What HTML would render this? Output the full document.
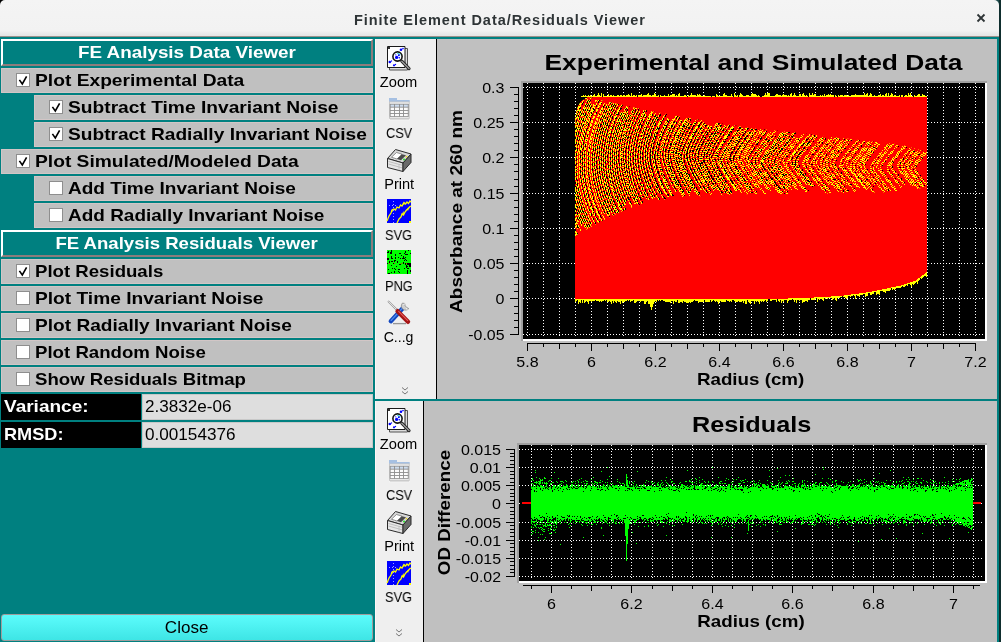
<!DOCTYPE html>
<html><head><meta charset="utf-8"><style>
*{margin:0;padding:0;box-sizing:border-box}
html,body{width:1001px;height:642px;overflow:hidden;background:#008080;font-family:"Liberation Sans",sans-serif}
.t{position:absolute;white-space:pre;line-height:1;will-change:transform}
.title{position:absolute;left:0;top:0;width:999px;height:37px;background:linear-gradient(#f4f4f4 0,#f2f2f2 85%,#e6e6e6 97%);border-bottom:1px solid #9c918b;border-radius:5px 5px 0 0}
.hdr{position:absolute;left:1px;width:372px;height:27px;background:#008080;border:2px solid;border-color:#fff #8c7c7c #8c7c7c #fff}
.row{position:absolute;height:25px;background:#c0c0c0;border:1px solid #d2c6c6}
.cb{position:absolute;width:14px;height:14px;background:#fff;border:1px solid #8e8e8e}
.cb svg{position:absolute;left:-1px;top:-1px}
.lab{position:absolute;left:1px;width:140px;height:26px;background:#000}
.val{position:absolute;left:142px;width:231px;height:26px;background:#dedede;border:1px solid #c8c8c8}
.close{position:absolute;left:1px;top:614px;width:372px;height:27px;border:1px solid #a09c9c;border-radius:3px;background:linear-gradient(#5cfcfc,#3ee5e5)}
.tb{position:absolute;background:#efefef;border-left:1px solid #fff6f6;border-right:1px solid #000}
.pw{position:absolute;background:#c0c0c0}
.ps{position:absolute;font-family:"Liberation Sans",sans-serif;shape-rendering:crispEdges;will-change:transform}
.ps text{shape-rendering:auto}
.rb{position:absolute;left:999px;top:0;width:2px;height:642px;background:#0f2e2e}
.c1{position:absolute;left:0;top:0;width:6px;height:6px;background:#000}
.c2{position:absolute;left:992px;top:0;width:8px;height:8px;background:#1d4a4a}
</style></head><body>
<div class="c1"></div><div class="c2"></div>
<div class="hdr" style="top:39px"></div>
<div class="hdr" style="top:230px"></div>
<div class="row" style="left:1px;top:68px;width:372px"></div>
<div class="cb" style="left:16px;top:73px"><svg width="13" height="13" viewBox="0 0 13 13"><path d="M3.4 6.9 L6.3 11.0 L10.6 3.3" fill="none" stroke="#000" stroke-width="1.6" stroke-linecap="butt" stroke-linejoin="miter"/></svg></div>
<div class="row" style="left:34px;top:95px;width:339px"></div>
<div class="cb" style="left:49px;top:100px"><svg width="13" height="13" viewBox="0 0 13 13"><path d="M3.4 6.9 L6.3 11.0 L10.6 3.3" fill="none" stroke="#000" stroke-width="1.6" stroke-linecap="butt" stroke-linejoin="miter"/></svg></div>
<div class="row" style="left:34px;top:122px;width:339px"></div>
<div class="cb" style="left:49px;top:127px"><svg width="13" height="13" viewBox="0 0 13 13"><path d="M3.4 6.9 L6.3 11.0 L10.6 3.3" fill="none" stroke="#000" stroke-width="1.6" stroke-linecap="butt" stroke-linejoin="miter"/></svg></div>
<div class="row" style="left:1px;top:149px;width:372px"></div>
<div class="cb" style="left:16px;top:154px"><svg width="13" height="13" viewBox="0 0 13 13"><path d="M3.4 6.9 L6.3 11.0 L10.6 3.3" fill="none" stroke="#000" stroke-width="1.6" stroke-linecap="butt" stroke-linejoin="miter"/></svg></div>
<div class="row" style="left:34px;top:176px;width:339px"></div>
<div class="cb" style="left:49px;top:181px"></div>
<div class="row" style="left:34px;top:203px;width:339px"></div>
<div class="cb" style="left:49px;top:208px"></div>
<div class="row" style="left:1px;top:259px;width:372px"></div>
<div class="cb" style="left:16px;top:264px"><svg width="13" height="13" viewBox="0 0 13 13"><path d="M3.4 6.9 L6.3 11.0 L10.6 3.3" fill="none" stroke="#000" stroke-width="1.6" stroke-linecap="butt" stroke-linejoin="miter"/></svg></div>
<div class="row" style="left:1px;top:286px;width:372px"></div>
<div class="cb" style="left:16px;top:291px"></div>
<div class="row" style="left:1px;top:313px;width:372px"></div>
<div class="cb" style="left:16px;top:318px"></div>
<div class="row" style="left:1px;top:340px;width:372px"></div>
<div class="cb" style="left:16px;top:345px"></div>
<div class="row" style="left:1px;top:367px;width:372px"></div>
<div class="cb" style="left:16px;top:372px"></div>
<div class="lab" style="top:394px"></div>
<div class="val" style="top:394px"></div>
<div class="lab" style="top:422px"></div>
<div class="val" style="top:422px"></div>
<div class="close"></div>
<div class="title"></div>
<svg class="x" width="10" height="10" viewBox="0 0 10 10" style="position:absolute;left:976px;top:13px"><path d="M1.5 1.5 L8.5 8.5 M8.5 1.5 L1.5 8.5" stroke="#2e3436" stroke-width="1.8"/></svg>
<div class="tb" style="left:375px;top:39px;width:62px;height:360px"></div>
<div class="tb" style="left:375px;top:401px;width:49px;height:241px"></div>
<div class="pw" style="left:437px;top:39px;width:560px;height:360px"></div>
<div class="pw" style="left:424px;top:401px;width:573px;height:241px"></div>
<svg class="ps" style="left:437px;top:39px" width="560" height="360" viewBox="437 39 560 360"><rect x="521" y="81" width="466" height="260" fill="#fff"/>
<path d="M521 81H987v2H523V341H521z" fill="#a0a0a0"/>
<rect x="523" y="83" width="462" height="256" fill="#000"/>
<path d="M527.5 83V338M543.5 83V338M559.5 83V338M575.5 83V338M591.5 83V338M607.5 83V338M623.5 83V338M639.5 83V338M655.5 83V338M671.5 83V338M687.5 83V338M703.5 83V338M719.5 83V338M735.5 83V338M751.5 83V338M767.5 83V338M783.5 83V338M799.5 83V338M815.5 83V338M831.5 83V338M847.5 83V338M863.5 83V338M879.5 83V338M895.5 83V338M911.5 83V338M927.5 83V338M943.5 83V338M959.5 83V338M975.5 83V338" stroke="#fff" stroke-width="1" stroke-dasharray="1 2" fill="none"/><path d="M523 87.5H984M523 122.5H984M523 157.5H984M523 193.5H984M523 228.5H984M523 263.5H984M523 298.5H984M523 334.5H984" stroke="#fff" stroke-width="1" stroke-dasharray="1 2" fill="none"/>
<defs>
<pattern id="pL" width="2" height="8" patternUnits="userSpaceOnUse" patternTransform="skewY(-20)">
<rect width="2" height="8" fill="#f00"/>
<rect x="0" y="0" width="1" height="3" fill="#ff0"/><rect x="0" y="4" width="1" height="3" fill="#ff0"/>
<rect x="1" y="1" width="1" height="2" fill="#000"/><rect x="1" y="5" width="1" height="2" fill="#000"/>
</pattern>
<pattern id="pR" width="4" height="4" patternUnits="userSpaceOnUse">
<rect width="4" height="4" fill="#f00"/>
<rect x="0" y="0" width="1" height="1" fill="#ff0"/><rect x="2" y="0" width="1" height="1" fill="#ff0"/>
<rect x="1" y="1" width="1" height="1" fill="#ff0"/><rect x="3" y="1" width="1" height="1" fill="#ff0"/>
<rect x="0" y="2" width="1" height="1" fill="#ff0"/><rect x="2" y="2" width="1" height="1" fill="#000"/>
<rect x="1" y="3" width="1" height="1" fill="#000"/><rect x="3" y="3" width="1" height="1" fill="#ff0"/>
</pattern>
</defs>
<path d="M581 96h1v1h-1zM582 96h1v1h-1zM583 95h1v2h-1zM584 96h1v1h-1zM585 95h1v2h-1zM586 96h1v1h-1zM587 96h1v1h-1zM588 95h1v2h-1zM590 95h1v2h-1zM591 96h1v1h-1zM592 96h1v1h-1zM593 95h1v2h-1zM594 94h1v3h-1zM595 96h1v1h-1zM596 96h1v1h-1zM597 95h1v2h-1zM598 93h1v4h-1zM599 95h1v2h-1zM600 96h1v1h-1zM601 93h1v4h-1zM603 94h1v3h-1zM604 96h1v1h-1zM605 96h1v1h-1zM606 96h1v1h-1zM607 96h1v1h-1zM608 94h1v3h-1zM609 96h1v1h-1zM610 95h1v2h-1zM611 95h1v2h-1zM612 96h1v1h-1zM613 95h1v2h-1zM614 96h1v1h-1zM615 96h1v1h-1zM616 96h1v1h-1zM617 95h1v2h-1zM618 95h1v2h-1zM619 96h1v1h-1zM620 95h1v2h-1zM621 95h1v2h-1zM622 96h1v1h-1zM623 95h1v2h-1zM624 95h1v2h-1zM625 96h1v1h-1zM626 95h1v2h-1zM627 95h1v2h-1zM628 94h1v3h-1zM629 95h1v2h-1zM630 96h1v1h-1zM631 93h1v4h-1zM632 96h1v1h-1zM633 95h1v2h-1zM634 95h1v2h-1zM635 96h1v1h-1zM636 95h1v2h-1zM638 95h1v2h-1zM639 95h1v2h-1zM640 95h1v2h-1zM641 94h1v3h-1zM642 96h1v1h-1zM643 95h1v2h-1zM644 95h1v2h-1zM645 95h1v2h-1zM646 95h1v2h-1zM647 94h1v3h-1zM648 93h1v4h-1zM649 95h1v2h-1zM650 95h1v2h-1zM651 96h1v1h-1zM652 95h1v2h-1zM653 95h1v2h-1zM654 93h1v4h-1zM655 94h1v3h-1zM656 96h1v1h-1zM657 96h1v1h-1zM658 95h1v2h-1zM660 95h1v2h-1zM661 96h1v1h-1zM662 96h1v1h-1zM663 96h1v1h-1zM664 95h1v2h-1zM665 96h1v1h-1zM666 96h1v1h-1zM667 96h1v1h-1zM668 94h1v3h-1zM669 96h1v1h-1zM670 95h1v2h-1zM671 95h1v2h-1zM672 94h1v3h-1zM673 94h1v3h-1zM674 94h1v3h-1zM675 96h1v1h-1zM676 95h1v2h-1zM677 96h1v1h-1zM678 94h1v3h-1zM679 93h1v4h-1zM680 96h1v1h-1zM681 96h1v1h-1zM682 96h1v1h-1zM683 96h1v1h-1zM684 95h1v2h-1zM685 95h1v2h-1zM686 96h1v1h-1zM688 95h1v2h-1zM689 96h1v1h-1zM690 95h1v2h-1zM691 93h1v4h-1zM692 95h1v2h-1zM693 95h1v2h-1zM694 95h1v2h-1zM695 95h1v2h-1zM696 96h1v1h-1zM697 94h1v3h-1zM698 95h1v2h-1zM699 94h1v3h-1zM700 95h1v2h-1zM701 96h1v1h-1zM702 96h1v1h-1zM703 96h1v1h-1zM704 95h1v2h-1zM705 96h1v1h-1zM706 96h1v1h-1zM707 96h1v1h-1zM708 96h1v1h-1zM709 96h1v1h-1zM710 96h1v1h-1zM712 96h1v1h-1zM713 96h1v1h-1zM714 96h1v1h-1zM716 94h1v3h-1zM717 95h1v2h-1zM718 96h1v1h-1zM719 96h1v1h-1zM720 96h1v1h-1zM721 96h1v1h-1zM722 96h1v1h-1zM723 94h1v3h-1zM724 93h1v4h-1zM725 95h1v2h-1zM726 95h1v2h-1zM727 96h1v1h-1zM728 96h1v1h-1zM729 96h1v1h-1zM730 96h1v1h-1zM731 94h1v3h-1zM732 96h1v1h-1zM734 93h1v4h-1zM735 95h1v2h-1zM736 96h1v1h-1zM737 95h1v2h-1zM739 95h1v2h-1zM740 93h1v4h-1zM741 94h1v3h-1zM742 95h1v2h-1zM743 96h1v1h-1zM744 96h1v1h-1zM745 96h1v1h-1zM746 95h1v2h-1zM747 95h1v2h-1zM748 95h1v2h-1zM749 96h1v1h-1zM750 96h1v1h-1zM751 94h1v3h-1zM752 93h1v4h-1zM753 94h1v3h-1zM754 94h1v3h-1zM755 94h1v3h-1zM756 95h1v2h-1zM757 96h1v1h-1zM758 95h1v2h-1zM759 96h1v1h-1zM762 96h1v1h-1zM763 96h1v1h-1zM764 95h1v2h-1zM765 93h1v4h-1zM766 95h1v2h-1zM767 93h1v4h-1zM768 93h1v4h-1zM769 93h1v4h-1zM770 96h1v1h-1zM771 96h1v1h-1zM772 96h1v1h-1zM773 96h1v1h-1zM774 96h1v1h-1zM775 95h1v2h-1zM776 94h1v3h-1zM777 94h1v3h-1zM778 95h1v2h-1zM779 95h1v2h-1zM780 95h1v2h-1zM781 96h1v1h-1zM782 95h1v2h-1zM783 94h1v3h-1zM784 95h1v2h-1zM785 95h1v2h-1zM786 95h1v2h-1zM787 96h1v1h-1zM788 95h1v2h-1zM789 96h1v1h-1zM790 94h1v3h-1zM791 93h1v4h-1zM792 96h1v1h-1zM793 95h1v2h-1zM794 93h1v4h-1zM795 95h1v2h-1zM796 96h1v1h-1zM797 96h1v1h-1zM798 96h1v1h-1zM799 94h1v3h-1zM800 94h1v3h-1zM801 96h1v1h-1zM802 94h1v3h-1zM803 93h1v4h-1zM804 95h1v2h-1zM805 96h1v1h-1zM806 95h1v2h-1zM807 96h1v1h-1zM809 93h1v4h-1zM810 95h1v2h-1zM811 95h1v2h-1zM812 93h1v4h-1zM813 95h1v2h-1zM814 94h1v3h-1zM815 94h1v3h-1zM816 96h1v1h-1zM817 96h1v1h-1zM818 96h1v1h-1zM819 96h1v1h-1zM820 95h1v2h-1zM821 96h1v1h-1zM822 95h1v2h-1zM823 96h1v1h-1zM824 94h1v3h-1zM825 96h1v1h-1zM826 95h1v2h-1zM827 95h1v2h-1zM828 94h1v3h-1zM829 95h1v2h-1zM830 94h1v3h-1zM831 95h1v2h-1zM832 95h1v2h-1zM833 95h1v2h-1zM835 95h1v2h-1zM836 96h1v1h-1zM838 95h1v2h-1zM839 96h1v1h-1zM840 95h1v2h-1zM841 95h1v2h-1zM842 95h1v2h-1zM843 96h1v1h-1zM844 95h1v2h-1zM845 95h1v2h-1zM846 95h1v2h-1zM847 96h1v1h-1zM848 95h1v2h-1zM849 96h1v1h-1zM850 96h1v1h-1zM851 95h1v2h-1zM852 95h1v2h-1zM853 95h1v2h-1zM854 95h1v2h-1zM855 94h1v3h-1zM856 95h1v2h-1zM857 95h1v2h-1zM858 95h1v2h-1zM859 95h1v2h-1zM860 95h1v2h-1zM861 95h1v2h-1zM862 95h1v2h-1zM863 95h1v2h-1zM864 93h1v4h-1zM865 95h1v2h-1zM866 94h1v3h-1zM867 93h1v4h-1zM868 96h1v1h-1zM869 95h1v2h-1zM870 93h1v4h-1zM871 94h1v3h-1zM872 96h1v1h-1zM873 96h1v1h-1zM874 95h1v2h-1zM875 96h1v1h-1zM876 96h1v1h-1zM877 96h1v1h-1zM878 95h1v2h-1zM879 95h1v2h-1zM880 94h1v3h-1zM881 96h1v1h-1zM882 95h1v2h-1zM883 95h1v2h-1zM884 96h1v1h-1zM885 94h1v3h-1zM886 93h1v4h-1zM887 96h1v1h-1zM888 93h1v4h-1zM889 96h1v1h-1zM890 95h1v2h-1zM891 93h1v4h-1zM892 94h1v3h-1zM893 96h1v1h-1zM894 95h1v2h-1zM895 95h1v2h-1zM896 96h1v1h-1zM897 96h1v1h-1zM898 96h1v1h-1zM899 95h1v2h-1zM901 95h1v2h-1zM902 95h1v2h-1zM904 96h1v1h-1zM905 95h1v2h-1zM906 95h1v2h-1zM907 96h1v1h-1zM908 93h1v4h-1zM909 95h1v2h-1zM910 93h1v4h-1zM911 96h1v1h-1zM912 96h1v1h-1zM914 95h1v2h-1zM915 96h1v1h-1zM916 96h1v1h-1zM917 95h1v2h-1zM918 94h1v3h-1zM919 94h1v3h-1zM920 96h1v1h-1zM921 96h1v1h-1zM922 94h1v3h-1zM923 95h1v2h-1zM924 95h1v2h-1zM925 96h1v1h-1zM926 96h1v1h-1z" fill="#ff0"/>
<path d="M575 299h1v3h-1zM576 299h1v2h-1zM577 299h1v1h-1zM578 299h1v5h-1zM579 299h1v3h-1zM580 299h1v4h-1zM581 299h1v1h-1zM582 299h1v4h-1zM583 299h1v1h-1zM584 299h1v4h-1zM585 299h1v3h-1zM586 299h1v2h-1zM587 299h1v3h-1zM588 299h1v5h-1zM589 299h1v2h-1zM590 299h1v2h-1zM591 299h1v3h-1zM592 299h1v2h-1zM593 299h1v2h-1zM594 299h1v2h-1zM595 299h1v1h-1zM596 299h1v2h-1zM597 299h1v2h-1zM598 299h1v2h-1zM599 299h1v3h-1zM600 299h1v2h-1zM601 299h1v3h-1zM602 299h1v2h-1zM603 299h1v2h-1zM604 299h1v1h-1zM605 299h1v2h-1zM606 299h1v1h-1zM607 299h1v3h-1zM608 299h1v3h-1zM609 299h1v2h-1zM610 299h1v3h-1zM611 299h1v5h-1zM612 299h1v2h-1zM613 299h1v4h-1zM614 299h1v2h-1zM615 299h1v3h-1zM616 299h1v4h-1zM617 299h1v2h-1zM618 299h1v3h-1zM619 299h1v3h-1zM620 299h1v5h-1zM621 299h1v2h-1zM622 299h1v4h-1zM623 299h1v3h-1zM624 299h1v3h-1zM625 299h1v2h-1zM626 299h1v2h-1zM627 299h1v1h-1zM628 299h1v2h-1zM629 299h1v1h-1zM630 299h1v3h-1zM631 299h1v2h-1zM632 299h1v2h-1zM633 299h1v1h-1zM634 299h1v4h-1zM635 299h1v4h-1zM636 299h1v3h-1zM637 299h1v2h-1zM638 299h1v2h-1zM639 299h1v2h-1zM640 299h1v3h-1zM641 299h1v2h-1zM642 299h1v2h-1zM643 299h1v2h-1zM644 299h1v5h-1zM645 299h1v5h-1zM646 299h1v3h-1zM647 299h1v2h-1zM648 299h1v5h-1zM649 299h1v5h-1zM650 299h1v8h-1zM651 299h1v11h-1zM652 299h1v8h-1zM653 299h1v5h-1zM654 299h1v3h-1zM655 299h1v2h-1zM656 299h1v3h-1zM657 299h1v1h-1zM658 299h1v2h-1zM659 299h1v1h-1zM660 299h1v2h-1zM661 299h1v1h-1zM662 299h1v1h-1zM663 299h1v2h-1zM664 299h1v2h-1zM665 299h1v3h-1zM666 299h1v3h-1zM667 299h1v3h-1zM668 299h1v3h-1zM669 299h1v3h-1zM670 299h1v4h-1zM671 299h1v2h-1zM672 299h1v2h-1zM673 299h1v5h-1zM674 299h1v2h-1zM675 299h1v3h-1zM676 299h1v3h-1zM677 299h1v1h-1zM678 299h1v4h-1zM679 299h1v4h-1zM680 299h1v3h-1zM681 299h1v3h-1zM682 299h1v4h-1zM683 299h1v2h-1zM684 299h1v3h-1zM685 299h1v3h-1zM686 299h1v4h-1zM687 299h1v4h-1zM688 299h1v4h-1zM689 299h1v3h-1zM690 299h1v4h-1zM691 299h1v3h-1zM692 299h1v3h-1zM693 299h1v2h-1zM694 299h1v1h-1zM695 299h1v2h-1zM696 299h1v2h-1zM697 299h1v2h-1zM698 299h1v4h-1zM699 299h1v3h-1zM700 299h1v3h-1zM701 299h1v3h-1zM702 299h1v3h-1zM703 299h1v3h-1zM704 299h1v1h-1zM705 299h1v3h-1zM706 299h1v3h-1zM707 299h1v3h-1zM708 299h1v3h-1zM709 299h1v3h-1zM710 299h1v1h-1zM711 299h1v3h-1zM712 299h1v2h-1zM713 299h1v1h-1zM714 299h1v2h-1zM715 299h1v3h-1zM716 299h1v2h-1zM717 299h1v3h-1zM718 299h1v5h-1zM719 299h1v3h-1zM720 299h1v2h-1zM721 299h1v3h-1zM722 299h1v3h-1zM723 299h1v3h-1zM724 299h1v3h-1zM725 299h1v3h-1zM726 299h1v1h-1zM727 299h1v2h-1zM728 299h1v2h-1zM729 299h1v3h-1zM730 299h1v2h-1zM731 299h1v3h-1zM732 299h1v1h-1zM733 299h1v1h-1zM734 299h1v2h-1zM735 299h1v3h-1zM736 299h1v3h-1zM737 299h1v3h-1zM738 299h1v2h-1zM739 299h1v3h-1zM740 299h1v3h-1zM741 299h1v3h-1zM742 299h1v2h-1zM743 299h1v4h-1zM744 299h1v2h-1zM745 299h1v5h-1zM746 299h1v5h-1zM747 299h1v1h-1zM748 299h1v3h-1zM749 299h1v4h-1zM750 299h1v5h-1zM751 299h1v2h-1zM752 299h1v2h-1zM753 299h1v2h-1zM754 299h1v5h-1zM755 299h1v2h-1zM756 299h1v3h-1zM757 299h1v2h-1zM758 299h1v3h-1zM759 299h1v5h-1zM760 299h1v2h-1zM761 298h1v4h-1zM762 298h1v3h-1zM763 298h1v4h-1zM764 298h1v3h-1zM765 298h1v2h-1zM766 298h1v4h-1zM767 298h1v3h-1zM768 298h1v1h-1zM769 298h1v1h-1zM770 298h1v3h-1zM771 298h1v3h-1zM772 298h1v2h-1zM773 298h1v2h-1zM774 298h1v2h-1zM775 298h1v2h-1zM776 298h1v4h-1zM777 298h1v1h-1zM778 298h1v3h-1zM779 298h1v4h-1zM780 298h1v2h-1zM781 298h1v5h-1zM782 298h1v3h-1zM783 298h1v4h-1zM784 298h1v2h-1zM785 298h1v2h-1zM786 298h1v2h-1zM787 298h1v5h-1zM788 298h1v3h-1zM789 298h1v2h-1zM790 298h1v2h-1zM791 298h1v2h-1zM792 298h1v1h-1zM793 298h1v2h-1zM794 298h1v4h-1zM795 298h1v2h-1zM796 298h1v5h-1zM797 298h1v2h-1zM798 298h1v2h-1zM799 298h1v3h-1zM800 298h1v2h-1zM801 298h1v2h-1zM802 298h1v5h-1zM803 298h1v4h-1zM804 298h1v4h-1zM805 298h1v3h-1zM806 297h1v4h-1zM807 297h1v5h-1zM808 297h1v3h-1zM809 297h1v3h-1zM810 297h1v1h-1zM811 297h1v3h-1zM812 297h1v3h-1zM813 297h1v3h-1zM814 297h1v3h-1zM815 297h1v2h-1zM816 297h1v1h-1zM817 297h1v5h-1zM818 297h1v2h-1zM819 297h1v3h-1zM820 297h1v2h-1zM821 297h1v2h-1zM822 297h1v3h-1zM823 296h1v5h-1zM824 296h1v2h-1zM825 296h1v3h-1zM826 296h1v2h-1zM827 296h1v3h-1zM828 296h1v2h-1zM829 296h1v2h-1zM830 296h1v2h-1zM831 296h1v2h-1zM832 296h1v4h-1zM833 296h1v3h-1zM834 296h1v2h-1zM835 296h1v4h-1zM836 296h1v5h-1zM837 296h1v2h-1zM838 296h1v2h-1zM839 296h1v2h-1zM840 296h1v1h-1zM841 295h1v2h-1zM842 295h1v1h-1zM843 295h1v2h-1zM844 295h1v2h-1zM845 295h1v3h-1zM846 295h1v4h-1zM847 295h1v3h-1zM848 294h1v2h-1zM849 294h1v2h-1zM850 294h1v3h-1zM851 294h1v2h-1zM852 294h1v2h-1zM853 294h1v1h-1zM854 294h1v2h-1zM855 294h1v5h-1zM856 293h1v2h-1zM857 293h1v3h-1zM858 293h1v3h-1zM859 293h1v4h-1zM860 293h1v2h-1zM861 293h1v2h-1zM862 293h1v2h-1zM863 292h1v2h-1zM864 292h1v2h-1zM865 292h1v5h-1zM866 292h1v4h-1zM867 292h1v4h-1zM868 292h1v1h-1zM869 292h1v1h-1zM870 292h1v3h-1zM871 291h1v4h-1zM872 291h1v3h-1zM873 291h1v3h-1zM874 291h1v1h-1zM875 290h1v2h-1zM876 290h1v5h-1zM877 290h1v4h-1zM878 290h1v4h-1zM879 290h1v5h-1zM880 289h1v2h-1zM881 289h1v2h-1zM882 289h1v2h-1zM883 289h1v3h-1zM884 289h1v3h-1zM885 288h1v5h-1zM886 288h1v3h-1zM887 288h1v3h-1zM888 288h1v3h-1zM889 288h1v3h-1zM890 287h1v3h-1zM891 287h1v1h-1zM892 287h1v3h-1zM893 287h1v2h-1zM894 286h1v4h-1zM895 286h1v3h-1zM896 286h1v2h-1zM897 286h1v2h-1zM898 286h1v2h-1zM899 285h1v3h-1zM900 285h1v3h-1zM901 285h1v2h-1zM902 285h1v1h-1zM903 284h1v3h-1zM904 284h1v3h-1zM905 284h1v2h-1zM906 283h1v2h-1zM907 283h1v3h-1zM908 283h1v1h-1zM909 282h1v2h-1zM910 282h1v3h-1zM911 282h1v5h-1zM912 281h1v3h-1zM913 281h1v4h-1zM914 281h1v3h-1zM915 281h1v2h-1zM916 280h1v2h-1zM917 279h1v5h-1zM918 278h1v3h-1zM919 278h1v2h-1zM920 277h1v1h-1zM921 276h1v3h-1zM922 275h1v3h-1zM923 275h1v2h-1zM924 274h1v2h-1zM925 273h1v3h-1zM926 272h1v5h-1z" fill="#ff0"/>
<path d="M575 299L575 120L577 108L581 101L587 97.5L592 97L927 97L927 272L915 281L900 285.7L870 292L840 296L800 298.3L760 299z" fill="#f00"/>
<path d="M575.5 236V120Q576 103 590 96.5" stroke="#ff0" stroke-width="1" fill="none" stroke-dasharray="2 2"/>
<clipPath id="cband"><path d="M575.0 130.0L576.0 112.0L579.0 104.0L583.0 100.0L588.0 98.0L592.0 97.6L600.0 100.0L608.0 101.8L616.0 103.5L624.0 105.3L632.0 107.0L640.0 108.8L648.0 110.6L656.0 112.1L664.0 113.5L672.0 115.0L680.0 116.4L688.0 117.8L696.0 119.3L704.0 120.6L712.0 121.9L720.0 123.2L728.0 124.5L736.0 125.8L744.0 127.0L752.0 128.2L760.0 129.0L768.0 129.8L776.0 130.6L784.0 131.4L792.0 132.2L800.0 133.0L808.0 134.0L816.0 134.9L824.0 135.9L832.0 136.8L840.0 137.8L848.0 138.8L856.0 139.7L864.0 140.5L872.0 141.4L880.0 142.3L888.0 143.2L896.0 144.1L904.0 145.6L912.0 147.8L920.0 150.1L927.0 152.0L927.0 187.0L927.0 187.0L919.0 188.5L911.0 190.0L903.0 191.4L895.0 192.1L887.0 192.3L879.0 192.4L871.0 192.6L863.0 192.7L855.0 192.9L847.0 193.1L839.0 193.2L831.0 193.4L823.0 193.5L815.0 193.7L807.0 193.9L799.0 194.0L791.0 194.0L783.0 194.0L775.0 194.0L767.0 194.0L759.0 194.0L751.0 194.0L743.0 194.3L735.0 194.6L727.0 194.9L719.0 195.2L711.0 195.6L703.0 195.9L695.0 196.5L687.0 197.3L679.0 198.1L671.0 198.9L663.0 199.7L655.0 200.5L647.0 202.1L639.0 205.0L631.0 207.8L623.0 211.0L615.0 214.8L607.0 218.6L599.0 222.6L591.0 227.0L583.0 231.5L575.0 236.0L575.0 236.0z"/></clipPath><g clip-path="url(#cband)">
<path d="M567.3 95.6L559.6 109.8L553.6 124.0L549.3 138.2L546.8 152.4L546.0 166.6L546.9 180.8L549.6 195.0L554.0 209.2L560.1 223.4L568.0 237.6M565.3 106.3L559.5 118.9L555.1 131.5L552.1 144.1L550.4 156.6L550.1 169.2L551.1 181.8L553.5 194.4L557.2 207.0L562.3 219.6L568.8 232.1M575.6 91.8L567.2 106.3L560.7 120.8L556.0 135.3L553.1 149.8L552.0 164.4L552.7 178.9L555.2 193.4L559.5 207.9L565.6 222.4L573.5 237.0M567.8 108.9L562.9 120.1L559.1 131.2L556.3 142.4L554.5 153.5L553.9 164.6L554.3 175.8L555.8 186.9L558.3 198.1L561.9 209.2L566.5 220.4M578.8 92.7L571.2 106.1L565.1 119.5L560.5 132.9L557.5 146.3L556.0 159.7L556.0 173.1L557.6 186.4L560.7 199.8L565.4 213.2L571.6 226.6M581.8 91.2L573.5 105.6L566.9 120.1L562.1 134.5L559.1 148.9L557.9 163.3L558.4 177.7L560.8 192.1L564.9 206.5L570.8 220.9L578.5 235.3M574.2 108.1L569.0 119.6L565.0 131.2L562.1 142.7L560.4 154.2L559.8 165.8L560.4 177.3L562.1 188.9L564.9 200.4L568.9 211.9L574.0 223.5M582.3 96.9L575.3 110.0L569.7 123.1L565.7 136.2L563.0 149.2L561.9 162.3L562.2 175.4L564.0 188.4L567.2 201.5L572.0 214.6L578.1 227.7M588.4 93.3L581.1 106.1L575.3 118.8L570.8 131.5L567.8 144.3L566.1 157.0L565.8 169.8L566.9 182.5L569.4 195.2L573.3 208.0L578.6 220.7M580.9 110.7L576.0 122.0L572.3 133.4L569.7 144.7L568.2 156.1L567.8 167.5L568.5 178.8L570.3 190.2L573.2 201.5L577.2 212.9L582.3 224.3M593.8 91.2L585.8 104.9L579.5 118.5L574.7 132.2L571.5 145.8L570.0 159.5L570.0 173.2L571.7 186.8L574.9 200.5L579.7 214.1L586.2 227.8M593.2 95.4L585.5 109.6L579.5 123.9L575.2 138.1L572.7 152.3L571.9 166.5L572.8 180.8L575.5 195.0L579.9 209.2L586.0 223.4L593.9 237.6M590.3 104.3L584.2 117.2L579.5 130.1L576.2 143.1L574.4 156.0L574.0 168.9L575.0 181.9L577.5 194.8L581.4 207.7L586.8 220.7L593.5 233.6M591.7 105.9L586.1 117.8L581.7 129.8L578.5 141.8L576.7 153.8L576.0 165.7L576.7 177.7L578.6 189.7L581.7 201.6L586.1 213.6L591.7 225.6M594.6 107.0L589.0 119.2L584.8 131.3L581.9 143.5L580.3 155.7L580.1 167.9L581.1 180.0L583.5 192.2L587.2 204.4L592.3 216.6L598.6 228.7M604.5 91.6L597.3 103.9L591.6 116.2L587.1 128.5L584.1 140.8L582.4 153.1L582.1 165.4L583.1 177.7L585.5 190.0L589.2 202.3L594.4 214.6M606.7 93.8L598.9 107.3L592.7 120.7L588.1 134.2L585.3 147.7L584.0 161.2L584.5 174.7L586.5 188.2L590.3 201.6L595.6 215.1L602.7 228.6M604.5 105.1L598.6 117.0L594.0 129.0L590.7 140.9L588.8 152.8L588.2 164.8L588.9 176.7L590.9 188.6L594.2 200.6L598.9 212.5L604.9 224.4M607.1 105.9L602.0 116.6L598.0 127.2L595.0 137.9L593.2 148.5L592.4 159.2L592.7 169.8L594.0 180.5L596.5 191.1L600.0 201.8L604.6 212.5M614.0 97.2L607.0 109.9L601.6 122.6L597.7 135.3L595.3 148.0L594.5 160.7L595.3 173.4L597.6 186.1L601.5 198.7L606.9 211.4L613.9 224.1M614.9 99.5L608.8 110.9L603.9 122.3L600.2 133.7L597.9 145.1L596.8 156.5L597.0 167.9L598.4 179.3L601.2 190.7L605.2 202.1L610.4 213.5M619.6 95.3L612.5 107.7L606.8 120.1L602.7 132.4L600.0 144.8L598.9 157.2L599.4 169.6L601.3 181.9L604.8 194.3L609.7 206.7L616.2 219.0M618.4 100.9L612.3 112.3L607.6 123.6L604.1 134.9L602.0 146.2L601.1 157.6L601.5 168.9L603.2 180.2L606.3 191.6L610.6 202.9L616.2 214.2M620.1 102.3L614.0 113.9L609.2 125.6L605.9 137.2L603.9 148.8L603.3 160.5L604.1 172.1L606.3 183.7L609.8 195.4L614.8 207.0L621.1 218.6M622.6 104.1L616.2 116.0L611.3 128.0L607.9 140.0L606.0 152.0L605.6 164.0L606.7 176.0L609.2 188.0L613.3 199.9L618.8 211.9L625.8 223.9M626.2 99.1L619.5 111.1L614.3 123.1L610.6 135.2L608.4 147.2L607.8 159.2L608.7 171.2L611.1 183.2L615.0 195.2L620.4 207.3L627.3 219.3M621.7 113.5L617.1 123.9L613.6 134.3L611.3 144.8L610.2 155.2L610.2 165.6L611.4 176.0L613.7 186.4L617.2 196.8L621.8 207.2L627.6 217.7M629.5 103.0L623.4 114.1L618.6 125.2L615.2 136.2L613.1 147.3L612.3 158.4L612.8 169.4L614.6 180.5L617.8 191.6L622.3 202.6L628.1 213.7M630.2 104.9L624.9 114.9L620.6 124.9L617.5 134.9L615.5 144.9L614.5 154.9L614.7 164.9L615.9 174.8L618.2 184.8L621.6 194.8L626.2 204.8M628.2 112.6L624.2 121.5L621.0 130.3L618.6 139.2L617.2 148.1L616.6 156.9L616.9 165.8L618.1 174.7L620.1 183.5L623.0 192.4L626.8 201.3M628.7 115.0L624.9 124.1L622.0 133.2L620.0 142.3L619.0 151.4L618.9 160.5L619.7 169.6L621.5 178.7L624.2 187.8L627.8 197.0L632.4 206.1M638.7 101.4L633.1 111.0L628.6 120.6L625.2 130.3L622.8 139.9L621.4 149.5L621.1 159.1L621.9 168.7L623.8 178.4L626.7 188.0L630.6 197.6M639.7 108.0L634.4 118.3L630.4 128.6L627.6 139.0L626.0 149.3L625.8 159.6L626.8 170.0L629.0 180.3L632.5 190.6L637.3 201.0L643.3 211.3M640.1 113.0L635.9 121.6L632.7 130.2L630.3 138.7L628.8 147.3L628.2 155.9L628.4 164.5L629.6 173.1L631.6 181.7L634.5 190.2L638.3 198.8M644.7 111.1L639.9 120.2L636.0 129.4L633.2 138.5L631.4 147.7L630.6 156.8L631.0 166.0L632.3 175.1L634.7 184.3L638.1 193.4L642.5 202.6M647.2 109.8L642.6 118.6L638.8 127.3L635.9 136.0L634.0 144.7L633.0 153.5L633.1 162.2L634.3 170.9L636.4 179.6L639.4 188.3L643.3 197.1M646.5 115.6L642.6 123.9L639.5 132.1L637.3 140.3L635.8 148.6L635.2 156.8L635.9 165.1L637.5 173.3L639.9 181.6L643.0 189.8L647.0 198.0M652.3 112.5L647.6 121.2L643.8 129.8L640.9 138.4L638.9 147.0L637.9 155.6L638.2 164.2L639.7 172.9L642.1 181.5L645.3 190.1L649.5 198.7M658.4 105.0L652.7 114.4L648.0 123.8L644.4 133.2L641.8 142.6L640.4 152.0L640.6 161.4L642.4 170.8L645.2 180.2L649.0 189.5L654.0 198.9M656.1 114.5L651.7 122.7L648.2 130.9L645.5 139.1L643.6 147.3L642.5 155.5L643.2 163.7L644.9 171.9L647.4 180.1L650.7 188.3L654.9 196.5M657.2 117.0L652.8 125.8L649.3 134.5L646.8 143.3L645.2 152.0L645.3 160.7L646.9 169.5L649.5 178.2L653.1 187.0L657.5 195.7L662.9 204.5M665.9 106.0L660.5 114.7L655.9 123.4L652.2 132.2L649.5 140.9L647.7 149.6L647.6 158.3L649.3 167.0L651.9 175.7L655.5 184.4L659.9 193.1M661.2 120.9L657.3 128.9L654.1 136.9L651.7 144.9L650.1 152.9L650.2 161.0L651.9 169.0L654.4 177.0L657.6 185.0L661.7 193.0L666.5 201.1M669.3 109.5L664.2 117.8L660.0 126.2L656.6 134.5L654.1 142.9L652.5 151.2L653.1 159.6L655.1 167.9L658.0 176.3L661.7 184.7L666.3 193.0M668.7 118.8L664.5 126.5L660.9 134.2L658.1 141.9L656.0 149.6L654.7 157.3L656.0 165.0L658.1 172.8L661.0 180.5L664.5 188.2L668.8 195.9M669.7 119.9L665.7 127.5L662.4 135.1L659.9 142.7L658.0 150.3L657.6 157.9L659.3 165.5L661.7 173.1L664.9 180.7L668.7 188.3L673.2 195.9M677.6 116.3L673.3 123.8L669.6 131.3L666.5 138.8L664.2 146.2L662.6 153.7L663.8 161.2L666.0 168.7L668.9 176.2L672.5 183.6L676.7 191.1M682.6 113.0L677.9 120.6L673.8 128.1L670.4 135.7L667.7 143.2L665.7 150.7L665.8 158.3L667.8 165.8L670.6 173.4L674.1 180.9L678.2 188.5M686.4 120.0L681.9 127.3L678.1 134.7L674.8 142.0L672.2 149.4L670.4 156.8L671.6 164.1L674.1 171.5L677.1 178.8L680.8 186.2L685.1 193.6M699.5 123.7L694.7 131.3L690.6 139.0L687.1 146.6L684.3 154.3L684.1 161.9L686.8 169.6L690.2 177.2L694.3 184.8L699.0 192.5L704.3 200.1M705.0 117.4L700.2 124.5L695.9 131.6L692.2 138.8L689.1 145.9L686.6 153.1L687.4 160.2L690.2 167.4L693.5 174.5L697.4 181.7L701.9 188.8M704.5 123.1L700.1 130.1L696.2 137.2L692.9 144.2L690.1 151.2L689.5 158.2L692.1 165.2L695.3 172.3L699.0 179.3L703.2 186.3L708.0 193.3M709.4 126.5L705.6 132.5L702.2 138.5L699.2 144.5L696.6 150.5L694.5 156.5L696.5 162.5L699.0 168.5L702.0 174.5L705.4 180.5L709.2 186.5M733.2 121.3L727.9 128.4L723.1 135.6L718.7 142.7L714.9 149.8L711.7 157.0L714.0 164.1L717.7 171.2L722.0 178.4L726.7 185.5L731.9 192.6" stroke="#000" stroke-width="1" fill="none" stroke-dasharray="3 2"/>
<path d="M742.7 128.9L738.0 135.2L733.7 141.5L729.7 147.7L726.1 154.0L723.1 160.3L725.9 166.6L729.5 172.9L733.5 179.2L737.8 185.4L742.4 191.7M743.1 131.9L738.6 138.1L734.4 144.4L730.6 150.6L727.3 156.9L727.9 163.1L731.3 169.4L735.2 175.6L739.5 181.9L744.0 188.1L748.9 194.4M756.3 129.0L751.2 135.5L746.5 142.0L742.0 148.5L738.0 155.0L736.0 161.6L739.6 168.1L743.8 174.6L748.4 181.1L753.3 187.6L758.4 194.1M755.8 131.7L751.6 137.2L747.6 142.8L743.9 148.3L740.5 153.8L739.0 159.4L742.1 164.9L745.7 170.5L749.6 176.0L753.6 181.6L757.9 187.1M764.7 129.2L760.3 134.8L756.1 140.3L752.1 145.9L748.4 151.5L745.1 157.0L747.0 162.6L750.6 168.2L754.5 173.7L758.6 179.3L763.0 184.9M770.4 127.1L765.3 133.3L760.5 139.5L755.9 145.7L751.7 151.9L748.0 158.0L750.8 164.2L755.0 170.4L759.5 176.6L764.2 182.7L769.2 188.9M777.5 129.9L772.8 135.6L768.3 141.2L763.9 146.9L759.8 152.5L756.0 158.1L755.5 163.8L759.2 169.4L763.3 175.1L767.6 180.7L772.1 186.3M775.7 136.0L771.1 141.7L766.7 147.4L762.5 153.0L758.6 158.7L759.1 164.4L762.9 170.1L767.2 175.8L771.6 181.5L776.3 187.1L781.1 192.8M789.9 127.9L784.2 134.5L778.6 141.1L773.3 147.8L768.3 154.4L763.9 161.0L768.1 167.6L773.2 174.3L778.5 180.9L784.0 187.5L789.7 194.1M789.4 135.9L784.9 141.2L780.6 146.5L776.4 151.7L772.4 157.0L771.3 162.3L775.1 167.6L779.2 172.9L783.6 178.2L788.0 183.5L792.6 188.8M795.4 137.8L791.1 142.9L786.9 148.0L782.8 153.2L779.0 158.3L777.7 163.4L781.3 168.5L785.3 173.6L789.5 178.7L793.8 183.8L798.2 188.9M798.6 138.8L794.6 143.5L790.7 148.2L786.9 153.0L783.3 157.7L780.1 162.4L783.2 167.1L786.8 171.9L790.6 176.6L794.5 181.3L798.5 186.0M809.8 129.1L804.3 135.4L798.9 141.7L793.7 147.9L788.7 154.2L784.2 160.5L787.0 166.8L791.9 173.0L797.0 179.3L802.3 185.6L807.8 191.8M806.8 139.2L802.4 144.4L798.1 149.6L793.9 154.8L789.9 160.0L787.7 165.2L791.3 170.4L795.4 175.6L799.6 180.8L804.0 186.0L808.5 191.2M811.9 134.0L807.5 139.0L803.3 144.1L799.1 149.2L795.1 154.3L791.5 159.4L792.5 164.4L796.3 169.5L800.4 174.6L804.6 179.7L808.9 184.7M820.4 133.6L815.9 138.8L811.5 144.0L807.2 149.2L803.1 154.3L799.2 159.5L798.4 164.7L802.2 169.9L806.3 175.1L810.5 180.3L814.9 185.5M826.3 134.6L821.2 140.5L816.2 146.4L811.4 152.3L806.9 158.2L804.4 164.1L808.7 170.0L813.3 175.9L818.2 181.8L823.3 187.7L828.4 193.6M825.9 138.8L821.3 144.2L816.8 149.6L812.5 155.1L808.5 160.5L809.5 165.9L813.6 171.3L817.9 176.7L822.4 182.1L827.1 187.5L831.8 193.0M830.1 140.5L825.7 145.6L821.4 150.8L817.2 156.0L813.3 161.1L811.3 166.3L815.0 171.4L819.0 176.6L823.2 181.7L827.6 186.9L832.1 192.0M834.5 136.7L830.4 141.5L826.3 146.3L822.4 151.1L818.6 155.9L815.1 160.7L816.1 165.5L819.7 170.4L823.5 175.2L827.5 180.0L831.6 184.8M840.2 134.5L835.3 140.1L830.5 145.8L825.8 151.4L821.4 157.1L817.5 162.7L821.1 168.4L825.5 174.0L830.2 179.7L835.0 185.3L839.9 191.0M839.5 139.2L835.0 144.5L830.6 149.8L826.4 155.0L822.5 160.3L822.5 165.6L826.4 170.8L830.6 176.1L835.0 181.4L839.5 186.7L844.2 191.9M844.8 139.0L840.7 143.8L836.7 148.5L832.8 153.2L829.1 158.0L825.6 162.7L825.6 167.5L829.1 172.2L832.8 177.0L836.8 181.7L840.8 186.4M844.7 142.5L840.5 147.5L836.4 152.4L832.5 157.3L828.8 162.3L829.0 167.2L832.6 172.1L836.5 177.0L840.6 182.0L844.8 186.9L849.1 191.8M851.9 136.0L847.7 140.9L843.6 145.7L839.6 150.6L835.7 155.4L832.2 160.2L832.1 165.1L835.7 169.9L839.5 174.7L843.5 179.6L847.6 184.4M854.9 136.8L850.2 142.2L845.7 147.6L841.3 153.0L837.1 158.3L834.6 163.7L838.4 169.1L842.6 174.5L847.1 179.9L851.7 185.3L856.4 190.6M863.3 135.9L858.9 140.9L854.6 145.9L850.4 150.9L846.3 156.0L842.6 161.0L841.9 166.0L845.5 171.0L849.5 176.0L853.7 181.0L858.0 186.1M861.0 144.1L857.4 148.4L853.8 152.7L850.3 157.0L847.0 161.3L844.1 165.6L846.8 169.9L850.1 174.2L853.6 178.5L857.1 182.8L860.8 187.0M865.1 141.7L861.1 146.3L857.3 150.9L853.5 155.6L850.0 160.2L848.1 164.8L851.4 169.4L855.0 174.0L858.8 178.6L862.6 183.2L866.6 187.8M872.2 140.1L868.0 145.0L863.8 149.9L859.8 154.7L855.9 159.6L852.3 164.5L852.7 169.3L856.3 174.2L860.2 179.0L864.3 183.9L868.5 188.8M874.0 141.4L869.5 146.6L865.1 151.8L860.9 157.0L856.9 162.2L855.0 167.4L858.8 172.6L862.9 177.7L867.2 182.9L871.6 188.1L876.2 193.3M876.9 143.1L873.1 147.5L869.3 151.9L865.7 156.3L862.3 160.7L859.0 165.1L859.2 169.5L862.4 173.9L865.9 178.2L869.5 182.6L873.3 187.0M878.3 143.7L874.7 147.9L871.2 152.1L867.8 156.3L864.5 160.5L861.6 164.7L863.2 168.8L866.4 173.0L869.7 177.2L873.2 181.4L876.8 185.6M880.4 144.7L876.4 149.4L872.6 154.1L868.8 158.8L865.4 163.5L866.2 168.2L869.7 172.9L873.5 177.6L877.4 182.3L881.4 187.0L885.6 191.7M892.0 142.2L887.7 147.0L883.6 151.8L879.6 156.7L875.7 161.5L872.2 166.3L873.0 171.1L876.7 175.9L880.6 180.8L884.6 185.6L888.8 190.4M898.7 145.9L895.1 150.0L891.6 154.2L888.2 158.3L884.9 162.5L881.9 166.6L882.8 170.8L885.9 174.9L889.2 179.1L892.7 183.2L896.2 187.4M905.8 145.9L902.2 150.0L898.7 154.1L895.3 158.2L892.0 162.4L889.0 166.5L889.5 170.6L892.6 174.7L895.9 178.8L899.3 183.0L902.8 187.1M906.5 146.9L903.3 150.6L900.1 154.3L897.1 158.1L894.3 161.8L891.7 165.6L893.9 169.3L896.7 173.0L899.7 176.8L902.8 180.5L906.0 184.2M916.7 143.3L913.0 147.6L909.4 151.8L905.9 156.1L902.5 160.4L899.4 164.6L900.3 168.9L903.5 173.1L906.9 177.4L910.5 181.6L914.1 185.9M917.5 147.4L913.8 151.7L910.2 155.9L906.8 160.2L903.6 164.5L903.2 168.8L906.4 173.0L909.8 177.3L913.3 181.6L917.0 185.9L920.7 190.1M922.7 146.9L918.9 151.2L915.2 155.5L911.7 159.8L908.3 164.1L905.4 168.4L908.2 172.8L911.5 177.1L915.1 181.4L918.7 185.7L922.5 190.0M925.9 146.4L922.3 150.6L918.7 154.7L915.3 158.9L912.0 163.1L909.1 167.2L911.2 171.4L914.5 175.6L917.9 179.7L921.4 183.9L925.0 188.1M925.1 153.1L922.1 156.5L919.2 160.0L916.4 163.5L913.8 167.0L912.8 170.5L915.3 173.9L918.0 177.4L920.9 180.9L923.8 184.4L926.8 187.8M929.5 150.9L926.6 154.2L923.8 157.5L921.1 160.8L918.5 164.2L916.1 167.5L916.9 170.8L919.4 174.1L922.0 177.4L924.8 180.7L927.6 184.0M942.4 157.1L940.0 159.9L937.7 162.6L935.5 165.4L933.5 168.2L932.8 170.9L934.7 173.7L936.9 176.5L939.2 179.2L941.5 182.0L943.9 184.8M948.5 154.0L945.7 157.1L943.0 160.3L940.4 163.5L937.9 166.6L935.7 169.8L937.4 173.0L939.8 176.2L942.4 179.3L945.1 182.5L947.8 185.7" stroke="#000" stroke-width="1" fill="none" stroke-dasharray="1 4"/>
<path d="M657.8 127.1L655.3 133.7L652.9 140.4L651.1 147.0L650.3 153.6L650.2 160.2L650.8 166.8L652.9 173.4L655.4 180.0L658.9 186.6L662.2 193.3M665.4 125.5L661.4 131.9L659.8 138.2L657.5 144.6L655.6 151.0L654.5 157.3L656.1 163.7L657.8 170.0L659.0 176.4L661.9 182.8L665.1 189.1M666.8 126.1L663.9 132.4L661.4 138.6L658.7 144.9L658.1 151.2L658.1 157.4L659.4 163.7L660.9 170.0L662.4 176.2L666.1 182.5L668.6 188.8M672.6 122.9L669.0 129.2L665.8 135.5L663.9 141.9L661.2 148.2L659.8 154.5L660.2 160.9L661.3 167.2L663.2 173.5L666.3 179.9L669.4 186.2M678.0 127.5L675.1 133.6L672.8 139.8L669.9 145.9L668.8 152.0L668.1 158.2L668.9 164.3L671.6 170.4L673.3 176.6L676.2 182.7L680.1 188.8M688.7 122.9L684.9 129.1L682.7 135.2L679.8 141.4L677.8 147.5L675.6 153.6L677.0 159.8L678.6 165.9L681.1 172.1L684.0 178.2L687.5 184.3M695.7 122.4L692.0 128.9L688.4 135.5L685.9 142.1L682.5 148.6L680.6 155.2L681.7 161.8L683.9 168.3L687.0 174.9L690.3 181.5L694.4 188.0M700.2 124.0L696.4 129.9L693.4 135.8L690.4 141.7L688.3 147.6L687.1 153.5L687.0 159.4L689.1 165.3L691.8 171.2L694.6 177.1L698.5 183.0M708.1 132.1L705.0 137.3L703.4 142.4L700.0 147.6L698.3 152.8L697.5 158.0L699.6 163.1L701.4 168.3L704.3 173.5L707.0 178.6L710.7 183.8M718.3 128.1L714.5 134.2L710.5 140.4L708.0 146.6L705.2 152.8L702.9 159.0L705.2 165.1L708.1 171.3L711.7 177.5L715.3 183.7L719.9 189.9M736.5 132.8L733.2 138.0L729.6 143.2L725.7 148.4L723.4 153.5L720.4 158.7L721.9 163.9L724.2 169.1L727.8 174.3L730.9 179.5L733.6 184.6M739.7 136.7L736.1 141.8L733.2 147.0L729.6 152.2L726.7 157.3L727.3 162.5L730.0 167.6L733.5 172.8L736.6 177.9L740.6 183.1L743.8 188.2M748.8 128.1L743.9 134.0L739.2 139.9L735.5 145.8L731.9 151.6L729.7 157.5L732.2 163.4L734.8 169.3L739.3 175.2L742.8 181.1L747.6 187.0M750.3 131.6L746.3 136.9L742.2 142.2L739.0 147.5L735.8 152.7L733.1 158.0L734.2 163.3L736.8 168.6L740.9 173.9L744.3 179.2L748.2 184.5M752.8 136.3L748.7 140.9L746.1 145.4L742.3 150.0L740.4 154.6L739.1 159.2L742.0 163.7L744.7 168.3L747.6 172.9L751.0 177.4L754.3 182.0M765.6 132.7L761.5 137.8L758.1 142.9L754.8 148.0L750.5 153.1L748.1 158.1L750.5 163.2L753.2 168.3L756.6 173.4L761.0 178.5L765.3 183.6M767.2 137.8L763.9 142.5L760.7 147.2L756.4 152.0L753.1 156.7L750.5 161.4L753.7 166.1L757.0 170.8L759.9 175.6L763.4 180.3L767.6 185.0M773.3 135.5L769.3 140.1L766.0 144.8L761.7 149.4L758.9 154.1L756.0 158.7L755.2 163.4L757.7 168.0L761.1 172.7L764.5 177.3L768.1 182.0M778.9 137.9L774.7 143.2L770.8 148.4L766.9 153.6L762.4 158.9L761.2 164.1L764.8 169.4L768.5 174.6L772.3 179.8L777.1 185.1L781.2 190.3M784.4 133.7L780.2 139.2L775.6 144.6L771.8 150.1L767.9 155.6L763.7 161.0L767.1 166.5L771.4 171.9L775.9 177.4L780.5 182.9L784.8 188.3M793.6 135.2L789.6 139.8L785.9 144.3L781.7 148.8L778.3 153.3L775.9 157.9L774.1 162.4L777.3 166.9L780.3 171.5L784.2 176.0L788.8 180.5M808.2 138.7L804.8 142.9L800.9 147.1L797.0 151.3L793.9 155.5L791.8 159.7L792.6 163.8L794.6 168.0L798.1 172.2L801.8 176.4L805.1 180.6M813.4 137.5L809.3 141.9L805.5 146.4L802.0 150.8L798.7 155.3L795.9 159.8L794.9 164.2L798.5 168.7L801.6 173.1L805.6 177.6L809.5 182.1" stroke="#000" stroke-width="1" fill="none" stroke-dasharray="3 3"/>
<path d="M640.0 102.6L634.4 112.6L629.9 122.5L626.6 132.5L624.5 142.4L623.5 152.4L623.6 162.4L624.9 172.3L627.4 182.3L631.0 192.2L635.7 202.2M681.9 121.3L677.7 128.7L674.0 136.2L671.1 143.6L668.8 151.0L668.0 158.5L669.9 165.9L672.5 173.4L675.8 180.8L679.7 188.2L684.2 195.7M693.2 111.6L687.6 119.9L682.7 128.2L678.6 136.6L675.4 144.9L673.0 153.3L674.3 161.6L677.2 169.9L681.0 178.3L685.5 186.6L690.8 195.0M693.3 116.1L688.5 123.6L684.3 131.0L680.8 138.4L677.9 145.9L675.8 153.3L676.9 160.8L679.4 168.2L682.7 175.7L686.5 183.1L691.0 190.6M691.4 123.7L687.7 130.2L684.5 136.6L681.7 143.1L679.5 149.5L678.3 156.0L680.1 162.5L682.5 168.9L685.5 175.4L688.8 181.8L692.7 188.3M701.1 115.1L695.7 123.1L690.9 131.0L686.9 139.0L683.5 146.9L681.0 154.9L682.4 162.9L685.4 170.8L689.2 178.8L693.6 186.7L698.8 194.7M706.2 125.1L702.0 131.9L698.3 138.8L695.1 145.6L692.5 152.5L693.0 159.4L695.7 166.2L699.1 173.1L702.9 179.9L707.2 186.8L712.0 193.7M711.9 126.9L707.9 133.2L704.4 139.5L701.2 145.8L698.6 152.0L697.8 158.3L700.2 164.6L703.2 170.8L706.6 177.1L710.4 183.4L714.6 189.7M721.5 119.6L716.5 126.5L712.0 133.4L707.9 140.4L704.3 147.3L701.3 154.2L701.2 161.1L704.1 168.0L707.7 174.9L711.7 181.8L716.2 188.7M723.3 121.7L718.0 129.2L713.2 136.7L709.0 144.2L705.3 151.7L703.2 159.1L706.3 166.6L710.1 174.1L714.5 181.6L719.5 189.1L724.9 196.6M721.1 128.1L716.8 134.5L713.0 141.0L709.6 147.4L706.8 153.9L707.0 160.3L710.0 166.8L713.4 173.2L717.3 179.7L721.6 186.1L726.2 192.6M726.0 126.3L721.4 133.1L717.1 139.8L713.4 146.6L710.2 153.3L709.4 160.0L712.4 166.8L716.1 173.5L720.1 180.3L724.7 187.0L729.6 193.7M732.7 128.0L728.4 134.0L724.4 140.1L720.8 146.1L717.5 152.1L714.7 158.1L716.2 164.2L719.2 170.2L722.7 176.2L726.5 182.2L730.7 188.3M738.9 121.3L733.7 128.2L729.0 135.0L724.6 141.9L720.8 148.7L717.5 155.6L719.6 162.4L723.3 169.3L727.5 176.1L732.1 183.0L737.1 189.8M740.8 127.0L736.1 133.2L731.8 139.5L727.7 145.8L724.1 152.1L721.0 158.4L722.0 164.7L725.3 170.9L729.1 177.2L733.2 183.5L737.7 189.8M753.4 121.7L747.8 128.8L742.5 136.0L737.6 143.1L733.2 150.3L729.4 157.4L732.3 164.6L736.6 171.7L741.4 178.8L746.6 186.0L752.2 193.1M755.2 125.6L750.1 132.0L745.4 138.4L740.9 144.8L736.9 151.2L733.3 157.6L734.3 164.0L738.1 170.5L742.3 176.9L746.8 183.3L751.7 189.7M783.5 132.7L778.2 139.0L773.0 145.4L768.1 151.7L763.5 158.1L761.5 164.4L765.8 170.8L770.6 177.1L775.7 183.5L780.9 189.8L786.4 196.2M792.3 128.7L787.1 134.8L781.9 140.8L777.0 146.9L772.2 153.0L767.9 159.0L769.9 165.1L774.5 171.2L779.3 177.3L784.4 183.3L789.6 189.4M798.4 129.7L793.6 135.2L788.9 140.7L784.3 146.2L779.9 151.7L775.8 157.2L774.3 162.7L778.3 168.2L782.6 173.7L787.1 179.2L791.8 184.7M817.8 132.2L813.1 137.6L808.5 143.0L804.0 148.4L799.7 153.9L795.7 159.3L795.5 164.7L799.5 170.1L803.8 175.5L808.3 180.9L812.9 186.3" stroke="#000" stroke-width="1.5" fill="none" stroke-dasharray="2 2"/>
<path d="M567.6 93.4L559.4 108.0L553.0 122.7L548.5 137.3L545.8 152.0L545.0 166.6L546.0 181.2L548.8 195.9L553.5 210.5L560.0 225.2L568.3 239.8M566.0 99.6L558.7 113.9L553.2 128.3L549.4 142.6L547.4 157.0L547.2 171.4L548.7 185.7L552.1 200.1L557.1 214.4L564.0 228.8L572.6 243.1M565.2 104.5L559.1 117.4L554.4 130.4L551.2 143.4L549.4 156.4L549.1 169.3L550.1 182.3L552.7 195.3L556.7 208.2L562.1 221.2L568.9 234.2M576.0 89.5L567.2 104.4L560.3 119.4L555.2 134.4L552.1 149.3L551.0 164.3L551.7 179.3L554.4 194.2L559.0 209.2L565.5 224.2L573.9 239.2M567.7 107.2L562.5 118.6L558.4 130.1L555.4 141.6L553.6 153.1L552.9 164.6L553.3 176.1L554.9 187.6L557.6 199.1L561.4 210.6L566.3 222.0M579.3 90.5L571.2 104.3L564.7 118.1L559.8 131.9L556.6 145.7L555.0 159.5L555.0 173.3L556.7 187.1L560.0 200.9L565.0 214.7L571.6 228.5M582.3 88.9L573.4 103.8L566.5 118.6L561.4 133.5L558.2 148.3L556.9 163.2L557.5 178.1L560.0 192.9L564.3 207.8L570.6 222.6L578.7 237.5M574.1 106.3L568.6 118.2L564.3 130.1L561.3 142.0L559.4 153.9L558.8 165.8L559.4 177.7L561.2 189.6L564.2 201.5L568.4 213.4L573.9 225.3M582.6 94.8L575.1 108.3L569.2 121.8L564.9 135.2L562.1 148.7L560.9 162.2L561.2 175.7L563.1 189.1L566.6 202.6L571.6 216.1L578.2 229.6M581.9 99.2L574.8 113.1L569.4 126.9L565.6 140.8L563.4 154.6L562.9 168.5L564.0 182.4L566.7 196.2L571.2 210.1L577.2 223.9L584.9 237.8M588.8 91.1L581.1 104.2L574.9 117.3L570.1 130.5L566.9 143.6L565.1 156.7L564.8 169.9L566.0 183.0L568.6 196.1L572.8 209.3L578.4 222.4M580.7 109.0L575.6 120.7L571.6 132.4L568.8 144.1L567.2 155.8L566.8 167.5L567.5 179.2L569.4 190.9L572.5 202.6L576.8 214.3L582.2 226.1M594.3 88.9L585.8 103.0L579.1 117.1L574.0 131.1L570.7 145.2L569.0 159.3L569.0 173.4L570.8 187.5L574.2 201.6L579.4 215.6L586.2 229.7M593.6 93.2L585.3 107.9L578.9 122.6L574.4 137.2L571.7 151.9L570.9 166.5L571.9 181.2L574.7 195.9L579.4 210.5L585.9 225.2L594.2 239.9M590.3 102.4L583.8 115.7L578.8 129.0L575.3 142.4L573.4 155.7L573.0 169.0L574.1 182.4L576.7 195.7L580.9 209.0L586.6 222.4L593.8 235.7M591.7 104.0L585.7 116.4L581.0 128.7L577.7 141.0L575.7 153.4L575.0 165.7L575.7 178.1L577.7 190.4L581.0 202.7L585.7 215.1L591.7 227.4M602.5 89.8L594.3 103.2L587.7 116.6L582.6 129.9L579.2 143.3L577.3 156.7L577.0 170.1L578.3 183.5L581.2 196.8L585.7 210.2L591.7 223.6M594.5 105.2L588.6 117.8L584.1 130.3L581.0 142.9L579.3 155.4L579.0 168.0L580.2 180.5L582.7 193.1L586.7 205.6L592.0 218.2L598.8 230.7M604.9 89.4L597.3 102.1L591.1 114.8L586.4 127.5L583.2 140.1L581.4 152.8L581.0 165.5L582.1 178.2L584.7 190.9L588.7 203.6L594.1 216.2M607.1 91.6L598.8 105.5L592.2 119.4L587.4 133.3L584.3 147.2L583.0 161.1L583.5 175.0L585.7 188.9L589.6 202.8L595.4 216.7L602.8 230.6M607.5 91.7L600.0 104.5L594.0 117.4L589.5 130.2L586.6 143.0L585.1 155.9L585.2 168.7L586.8 181.6L589.9 194.4L594.5 207.2L600.7 220.1M604.5 103.3L598.2 115.6L593.3 127.9L589.9 140.2L587.8 152.5L587.1 164.8L587.9 177.1L590.0 189.4L593.6 201.7L598.5 214.0L604.9 226.3M603.0 107.4L597.8 118.7L593.9 130.0L591.1 141.3L589.5 152.7L589.2 164.0L590.1 175.3L592.1 186.6L595.4 197.9L599.8 209.3L605.5 220.6M606.9 104.2L601.5 115.2L597.3 126.2L594.1 137.1L592.2 148.1L591.3 159.1L591.6 170.1L593.1 181.1L595.7 192.1L599.4 203.0L604.3 214.0M614.1 95.3L606.7 108.4L600.9 121.4L596.8 134.5L594.3 147.6L593.5 160.7L594.3 173.8L596.7 186.8L600.9 199.9L606.6 213.0L614.0 226.1M615.0 97.6L608.5 109.3L603.3 121.1L599.4 132.9L596.9 144.6L595.7 156.4L595.9 168.1L597.5 179.9L600.4 191.6L604.6 203.4L610.2 215.1M619.9 93.3L612.2 106.1L606.2 118.8L601.8 131.6L599.0 144.3L597.9 157.1L598.3 169.8L600.4 182.6L604.1 195.4L609.3 208.1L616.3 220.9M618.4 99.1L612.0 110.8L606.9 122.5L603.2 134.2L600.9 145.8L600.0 157.5L600.5 169.2L602.3 180.9L605.5 192.6L610.1 204.2L616.0 215.9M620.1 100.5L613.6 112.5L608.5 124.5L605.0 136.5L602.9 148.5L602.2 160.5L603.1 172.5L605.4 184.5L609.2 196.5L614.4 208.5L621.1 220.4M622.6 102.3L615.8 114.6L610.6 127.0L607.0 139.4L605.0 151.7L604.5 164.1L605.7 176.4L608.4 188.8L612.7 201.1L618.5 213.5L626.0 225.8M626.2 97.3L619.1 109.7L613.6 122.0L609.7 134.4L607.4 146.8L606.7 159.2L607.6 171.6L610.2 184.0L614.3 196.4L620.1 208.8L627.4 221.2M621.3 112.1L616.4 122.8L612.7 133.5L610.3 144.3L609.1 155.0L609.1 165.7L610.3 176.5L612.8 187.2L616.5 198.0L621.4 208.7L627.6 219.4M629.5 101.3L623.0 112.7L617.9 124.1L614.3 135.5L612.0 146.9L611.2 158.3L611.7 169.7L613.7 181.1L617.0 192.5L621.8 203.9L628.0 215.4M630.0 103.3L624.4 113.6L619.9 123.9L616.6 134.2L614.4 144.5L613.4 154.8L613.5 165.1L614.9 175.4L617.3 185.7L621.0 195.9L625.8 206.2M627.8 111.2L623.5 120.3L620.1 129.5L617.6 138.6L616.1 147.7L615.5 156.9L615.8 166.0L617.0 175.2L619.2 184.3L622.3 193.4L626.3 202.6M628.2 113.7L624.1 123.1L621.0 132.5L618.9 141.9L617.8 151.3L617.7 160.6L618.6 170.0L620.5 179.4L623.4 188.8L627.2 198.2L632.1 207.6M638.6 99.7L632.7 109.6L627.9 119.5L624.3 129.4L621.7 139.4L620.3 149.3L620.0 159.2L620.8 169.1L622.8 179.0L625.9 189.0L630.1 198.9M639.4 106.5L633.8 117.1L629.5 127.8L626.5 138.4L624.9 149.1L624.6 159.7L625.7 170.4L628.1 181.0L631.8 191.7L636.9 202.3L643.3 213.0M639.7 111.6L635.3 120.5L631.8 129.3L629.2 138.2L627.6 147.0L627.0 155.9L627.3 164.7L628.5 173.6L630.6 182.4L633.7 191.3L637.7 200.1M644.4 109.6L639.3 119.0L635.2 128.5L632.2 137.9L630.3 147.3L629.5 156.8L629.8 166.2L631.3 175.6L633.8 185.1L637.4 194.5L642.0 203.9M646.9 108.4L641.9 117.4L638.0 126.4L634.9 135.4L632.9 144.3L631.8 153.3L631.9 162.3L633.2 171.3L635.4 180.3L638.6 189.3L642.7 198.3M646.0 114.4L641.9 122.9L638.6 131.4L636.2 139.8L634.6 148.3L634.0 156.8L634.8 165.3L636.4 173.8L638.9 182.3L642.3 190.8L646.5 199.3M652.0 111.1L647.0 120.0L643.0 128.9L639.9 137.8L637.8 146.7L636.7 155.5L637.0 164.4L638.6 173.3L641.1 182.2L644.6 191.1L649.0 200.0M658.3 103.5L652.2 113.1L647.3 122.8L643.4 132.5L640.7 142.2L639.2 151.9L639.4 161.6L641.3 171.2L644.2 180.9L648.3 190.6L653.6 200.3M655.6 113.2L651.0 121.7L647.3 130.1L644.4 138.6L642.4 147.0L641.3 155.5L642.0 163.9L643.8 172.4L646.5 180.8L650.0 189.3L654.3 197.7M656.7 115.8L652.0 124.8L648.3 133.8L645.6 142.9L644.0 151.9L644.1 160.9L645.8 169.9L648.5 178.9L652.3 187.9L657.0 196.9L662.7 205.9M665.7 104.5L659.9 113.5L655.1 122.5L651.3 131.5L648.4 140.4L646.5 149.4L646.4 158.4L648.1 167.4L650.9 176.4L654.7 185.3L659.4 194.3M660.6 119.8L656.4 128.0L653.1 136.3L650.5 144.6L648.9 152.8L649.0 161.1L650.7 169.4L653.3 177.6L656.8 185.9L661.0 194.2L666.1 202.4M668.9 108.1L663.6 116.7L659.1 125.3L655.6 133.9L652.9 142.6L651.2 151.2L651.9 159.8L654.0 168.4L657.0 177.0L661.0 185.6L665.8 194.2M668.2 117.6L663.7 125.5L660.0 133.5L657.0 141.4L654.8 149.4L653.5 157.3L654.8 165.3L657.0 173.2L660.0 181.2L663.8 189.1L668.3 197.1M669.1 118.8L664.9 126.7L661.4 134.5L658.7 142.3L656.7 150.2L656.4 158.0L658.1 165.8L660.7 173.7L664.0 181.5L668.0 189.4L672.7 197.2M677.1 115.1L672.5 122.9L668.6 130.6L665.4 138.3L663.0 146.0L661.3 153.7L662.6 161.4L664.9 169.1L667.9 176.8L671.7 184.5L676.1 192.3M682.2 111.7L677.2 119.5L672.9 127.3L669.4 135.1L666.5 142.9L664.4 150.6L664.5 158.4L666.7 166.2L669.6 174.0L673.2 181.8L677.5 189.5M685.8 118.8L681.1 126.4L677.1 134.0L673.7 141.6L671.0 149.1L669.1 156.7L670.4 164.3L672.9 171.9L676.1 179.5L680.0 187.1L684.5 194.7M698.8 122.6L693.9 130.5L689.5 138.4L685.9 146.3L683.0 154.1L682.8 162.0L685.6 169.9L689.1 177.8L693.4 185.7L698.3 193.5L703.9 201.4M704.5 116.2L699.4 123.5L695.0 130.9L691.1 138.3L687.8 145.7L685.3 153.0L686.1 160.4L689.0 167.8L692.5 175.1L696.6 182.5L701.2 189.9M703.8 122.1L699.2 129.3L695.1 136.6L691.7 143.8L688.8 151.1L688.2 158.3L690.8 165.5L694.1 172.8L698.0 180.0L702.5 187.2L707.5 194.5M708.6 125.5L704.6 131.7L701.1 137.9L697.9 144.1L695.3 150.3L693.1 156.5L695.1 162.7L697.8 168.9L700.9 175.1L704.5 181.3L708.4 187.4M732.7 120.2L727.2 127.5L722.1 134.9L717.6 142.2L713.6 149.6L710.3 157.0L712.7 164.3L716.5 171.7L720.9 179.0L725.8 186.4L731.3 193.7" stroke="#ff0" stroke-width="1" fill="none" stroke-dasharray="3 1"/>
<path d="M639.9 100.9L633.9 111.2L629.2 121.5L625.7 131.7L623.4 142.0L622.3 152.3L622.5 162.6L623.9 172.8L626.5 183.1L630.3 193.4L635.4 203.6M676.7 114.2L671.7 122.1L667.4 130.0L663.9 137.9L661.2 145.8L659.2 153.7L659.2 161.7L661.2 169.6L664.0 177.5L667.5 185.4L671.7 193.3M681.3 120.2L676.8 127.9L673.0 135.5L669.9 143.2L667.6 150.9L666.7 158.5L668.6 166.2L671.4 173.9L674.8 181.5L678.9 189.2L683.7 196.9M692.8 110.2L686.9 118.8L681.8 127.4L677.6 136.0L674.2 144.6L671.7 153.2L673.1 161.8L676.1 170.4L680.0 179.0L684.7 187.6L690.3 196.2M692.8 114.9L687.8 122.6L683.4 130.3L679.7 137.9L676.7 145.6L674.5 153.3L675.6 161.0L678.3 168.6L681.7 176.3L685.7 184.0L690.4 191.7M690.6 122.7L686.8 129.4L683.4 136.1L680.5 142.7L678.2 149.4L677.0 156.0L678.9 162.7L681.4 169.4L684.4 176.0L688.0 182.7L692.0 189.3M700.7 113.8L695.0 122.0L690.0 130.2L685.8 138.4L682.3 146.6L679.7 154.8L681.1 163.1L684.2 171.3L688.2 179.5L692.9 187.7L698.3 195.9M705.4 124.1L701.0 131.2L697.1 138.3L693.8 145.3L691.1 152.4L691.7 159.5L694.5 166.6L698.0 173.6L702.0 180.7L706.5 187.8L711.5 194.9M711.1 126.0L706.9 132.5L703.2 139.0L700.0 145.4L697.2 151.9L696.4 158.4L698.9 164.8L702.0 171.3L705.5 177.8L709.5 184.2L713.9 190.7M721.0 118.4L715.8 125.6L711.0 132.7L706.8 139.8L703.1 146.9L700.0 154.1L699.8 161.2L702.9 168.3L706.5 175.5L710.8 182.6L715.5 189.7M722.8 120.6L717.2 128.3L712.2 136.0L707.8 143.7L704.0 151.5L701.8 159.2L705.0 166.9L708.9 174.6L713.5 182.3L718.7 190.1L724.4 197.8M720.3 127.2L715.9 133.8L711.9 140.5L708.3 147.1L705.4 153.8L705.7 160.4L708.7 167.1L712.3 173.7L716.3 180.4L720.8 187.0L725.6 193.7M725.2 125.4L720.4 132.3L716.0 139.3L712.1 146.2L708.8 153.2L708.0 160.1L711.1 167.1L714.9 174.0L719.2 181.0L723.9 187.9L729.0 194.9M731.9 127.0L727.5 133.2L723.3 139.5L719.5 145.7L716.2 151.9L713.3 158.1L714.8 164.3L717.9 170.5L721.5 176.7L725.5 182.9L729.8 189.2M738.2 120.2L732.9 127.3L727.9 134.3L723.4 141.4L719.4 148.5L716.1 155.5L718.2 162.6L722.1 169.7L726.4 176.7L731.2 183.8L736.4 190.9M740.1 125.9L735.3 132.4L730.7 138.9L726.5 145.4L722.8 151.8L719.5 158.3L720.6 164.8L724.0 171.3L728.0 177.7L732.3 184.2L736.9 190.7M741.9 127.9L737.1 134.4L732.6 140.9L728.4 147.4L724.7 153.8L721.6 160.3L724.6 166.8L728.3 173.3L732.4 179.7L736.9 186.2L741.7 192.7M742.2 131.0L737.6 137.5L733.2 143.9L729.3 150.3L725.8 156.8L726.5 163.2L730.0 169.7L734.1 176.1L738.5 182.6L743.2 189.0L748.3 195.5M752.9 120.6L747.0 127.9L741.5 135.3L736.4 142.7L731.8 150.0L727.9 157.4L730.9 164.7L735.4 172.1L740.4 179.5L745.8 186.8L751.6 194.2M754.5 124.5L749.3 131.1L744.3 137.8L739.7 144.4L735.5 151.0L731.8 157.6L732.9 164.2L736.8 170.8L741.1 177.4L745.9 184.0L750.9 190.6M755.5 128.0L750.3 134.7L745.3 141.5L740.7 148.2L736.6 154.9L734.5 161.6L738.2 168.3L742.6 175.0L747.3 181.7L752.4 188.5L757.8 195.2M754.9 130.9L750.5 136.6L746.4 142.3L742.6 148.0L739.1 153.7L737.5 159.4L740.7 165.1L744.4 170.9L748.4 176.6L752.7 182.3L757.1 188.0M761.7 127.4L756.4 134.0L751.4 140.7L746.7 147.4L742.5 154.0L740.9 160.7L744.9 167.4L749.4 174.0L754.3 180.7L759.5 187.4L765.0 194.1M763.9 128.3L759.3 134.1L754.9 139.8L750.8 145.5L746.9 151.3L743.5 157.0L745.6 162.7L749.3 168.5L753.3 174.2L757.6 179.9L762.1 185.7M769.6 126.2L764.4 132.5L759.4 138.9L754.6 145.3L750.3 151.6L746.4 158.0L749.4 164.4L753.7 170.8L758.3 177.1L763.3 183.5L768.5 189.9M770.7 131.9L765.9 137.8L761.3 143.7L756.9 149.6L752.8 155.5L749.4 161.4L752.9 167.3L756.9 173.2L761.3 179.1L765.9 185.0L770.8 190.9M776.7 129.0L771.9 134.8L767.2 140.6L762.7 146.4L758.4 152.2L754.5 158.0L753.9 163.9L757.8 169.7L762.0 175.5L766.5 181.3L771.1 187.1M774.8 135.2L770.0 141.1L765.4 146.9L761.1 152.8L757.1 158.6L757.5 164.5L761.5 170.4L765.9 176.2L770.5 182.1L775.3 187.9L780.3 193.8M782.7 131.7L777.2 138.3L771.8 144.8L766.7 151.4L762.0 157.9L759.9 164.5L764.4 171.0L769.3 177.6L774.6 184.1L780.0 190.7L785.7 197.2M789.2 126.9L783.2 133.7L777.5 140.5L772.0 147.4L766.8 154.2L762.3 161.0L766.7 167.8L771.9 174.7L777.4 181.5L783.1 188.3L789.0 195.1M791.6 127.7L786.1 134.0L780.8 140.2L775.7 146.5L770.8 152.7L766.3 159.0L768.4 165.3L773.1 171.5L778.1 177.8L783.4 184.0L788.7 190.3M788.5 135.1L783.8 140.6L779.3 146.0L774.9 151.5L770.8 156.9L769.7 162.4L773.6 167.8L777.9 173.3L782.4 178.7L787.0 184.2L791.7 189.6M797.6 128.8L792.6 134.4L787.8 140.1L783.1 145.8L778.5 151.4L774.2 157.1L772.7 162.7L776.8 168.4L781.3 174.1L785.9 179.7L790.8 185.4M794.4 137.1L789.9 142.3L785.5 147.6L781.3 152.9L777.4 158.2L776.0 163.4L779.8 168.7L783.9 174.0L788.3 179.2L792.7 184.5L797.3 189.8M797.5 138.1L793.4 142.9L789.3 147.8L785.4 152.7L781.7 157.5L778.4 162.4L781.6 167.3L785.3 172.1L789.2 177.0L793.3 181.9L797.4 186.8M809.0 128.1L803.3 134.6L797.7 141.1L792.4 147.5L787.2 154.0L782.6 160.4L785.5 166.9L790.5 173.4L795.8 179.8L801.3 186.3L806.9 192.8M805.8 138.4L801.2 143.8L796.7 149.1L792.4 154.5L788.3 159.9L786.0 165.2L789.8 170.6L794.0 175.9L798.3 181.3L802.9 186.7L807.5 192.0M811.0 133.1L806.4 138.4L802.0 143.6L797.7 148.8L793.6 154.1L789.8 159.3L790.9 164.5L794.8 169.8L799.0 175.0L803.3 180.2L807.8 185.5M816.9 131.3L812.1 136.9L807.3 142.4L802.7 148.0L798.2 153.6L794.0 159.2L793.8 164.7L798.0 170.3L802.4 175.9L807.0 181.5L811.8 187.0M819.5 132.7L814.8 138.1L810.3 143.4L805.8 148.7L801.6 154.1L797.6 159.4L796.7 164.8L800.6 170.1L804.9 175.5L809.3 180.8L813.8 186.2M825.4 133.8L820.1 139.8L814.9 145.9L810.0 152.0L805.3 158.1L802.8 164.1L807.1 170.2L812.0 176.3L817.0 182.4L822.2 188.5L827.6 194.5M824.8 138.1L820.1 143.7L815.4 149.2L811.0 154.8L806.9 160.4L807.9 166.0L812.1 171.6L816.6 177.2L821.3 182.7L826.1 188.3L831.0 193.9M829.1 139.7L824.5 145.0L820.1 150.4L815.8 155.7L811.7 161.0L809.6 166.3L813.4 171.6L817.6 176.9L822.0 182.2L826.5 187.5L831.1 192.9M833.5 135.9L829.2 140.8L825.0 145.8L821.0 150.7L817.1 155.7L813.5 160.7L814.4 165.6L818.2 170.6L822.1 175.6L826.2 180.5L830.5 185.5M839.3 133.6L834.2 139.4L829.2 145.2L824.4 151.0L819.8 156.9L815.8 162.7L819.6 168.5L824.1 174.3L828.9 180.2L833.9 186.0L838.9 191.8M838.5 138.5L833.8 143.9L829.3 149.4L824.9 154.8L820.9 160.2L820.9 165.7L824.9 171.1L829.3 176.5L833.8 182.0L838.5 187.4L843.2 192.8M843.9 138.2L839.6 143.1L835.4 148.0L831.4 152.9L827.5 157.8L823.9 162.7L824.0 167.5L827.6 172.4L831.4 177.3L835.5 182.2L839.6 187.1M843.6 141.9L839.2 146.9L835.0 152.0L831.0 157.1L827.2 162.2L827.3 167.3L831.1 172.3L835.1 177.4L839.4 182.5L843.7 187.6L848.1 192.7M850.9 135.2L846.6 140.2L842.3 145.2L838.2 150.2L834.2 155.2L830.5 160.1L830.4 165.1L834.1 170.1L838.1 175.1L842.2 180.1L846.5 185.1M853.9 136.0L849.1 141.6L844.4 147.1L839.8 152.7L835.5 158.2L832.9 163.8L836.8 169.3L841.2 174.9L845.8 180.4L850.6 186.0L855.4 191.5M862.3 135.0L857.8 140.2L853.3 145.4L849.0 150.5L844.8 155.7L840.9 160.9L840.2 166.1L844.0 171.2L848.1 176.4L852.4 181.6L856.9 186.7M859.9 143.4L856.1 147.9L852.4 152.3L848.8 156.7L845.4 161.1L842.4 165.6L845.2 170.0L848.6 174.4L852.2 178.9L855.9 183.3L859.7 187.7M864.0 141.0L859.9 145.8L855.9 150.5L852.1 155.3L848.4 160.1L846.4 164.8L849.8 169.6L853.5 174.3L857.4 179.1L861.5 183.8L865.6 188.6M871.2 139.3L866.8 144.3L862.5 149.3L858.4 154.4L854.4 159.4L850.7 164.4L851.1 169.4L854.8 174.4L858.8 179.4L863.0 184.4L867.3 189.4M873.0 140.7L868.3 146.0L863.8 151.4L859.4 156.7L855.3 162.1L853.4 167.4L857.2 172.8L861.5 178.1L865.9 183.5L870.5 188.8L875.2 194.2M875.8 142.4L871.9 146.9L868.0 151.4L864.3 156.0L860.7 160.5L857.4 165.0L857.6 169.5L860.9 174.1L864.5 178.6L868.2 183.1L872.1 187.6M877.2 143.0L873.5 147.3L869.8 151.7L866.3 156.0L863.0 160.3L859.9 164.6L861.6 168.9L864.8 173.3L868.3 177.6L871.9 181.9L875.6 186.2M879.3 144.1L875.1 148.9L871.1 153.8L867.3 158.6L863.7 163.5L864.6 168.3L868.2 173.1L872.1 178.0L876.2 182.8L880.3 187.6L884.6 192.5M891.0 141.4L886.6 146.3L882.3 151.3L878.2 156.3L874.2 161.3L870.5 166.2L871.4 171.2L875.2 176.2L879.2 181.2L883.4 186.1L887.7 191.1M891.3 145.1L887.3 149.7L883.4 154.3L879.7 158.9L876.1 163.5L872.9 168.1L875.5 172.7L879.0 177.3L882.7 181.9L886.6 186.5L890.6 191.1M894.3 142.5L890.1 147.4L885.9 152.3L882.0 157.2L878.2 162.1L877.0 167.0L880.5 171.9L884.4 176.8L888.5 181.7L892.7 186.6L897.0 191.6M897.6 145.2L893.9 149.5L890.3 153.8L886.7 158.0L883.4 162.3L880.3 166.6L881.2 170.9L884.4 175.2L887.8 179.4L891.4 183.7L895.0 188.0M904.7 145.2L901.0 149.4L897.4 153.7L893.8 157.9L890.5 162.2L887.4 166.4L887.9 170.7L891.1 174.9L894.5 179.2L898.0 183.4L901.6 187.7M905.3 146.3L902.0 150.1L898.7 154.0L895.6 157.8L892.7 161.7L890.0 165.5L892.2 169.4L895.2 173.2L898.3 177.1L901.5 181.0L904.8 184.8M915.7 142.6L911.8 147.0L908.1 151.4L904.4 155.8L901.0 160.2L897.7 164.6L898.7 168.9L902.0 173.3L905.5 177.7L909.2 182.1L913.0 186.5M916.3 146.8L912.5 151.2L908.8 155.6L905.2 160.0L901.9 164.4L901.6 168.8L904.8 173.2L908.3 177.6L912.0 182.0L915.8 186.4L919.7 190.9M921.5 146.2L917.7 150.7L913.9 155.1L910.2 159.6L906.7 164.0L903.7 168.4L906.6 172.9L910.1 177.3L913.7 181.8L917.5 186.2L921.4 190.7M924.8 145.7L921.0 150.0L917.4 154.3L913.8 158.6L910.4 162.9L907.4 167.2L909.6 171.5L912.9 175.8L916.5 180.1L920.1 184.4L923.9 188.7M923.8 152.6L920.7 156.1L917.7 159.7L914.9 163.3L912.2 166.9L911.2 170.5L913.7 174.1L916.5 177.7L919.5 181.2L922.5 184.8L925.6 188.4M928.2 150.4L925.3 153.8L922.4 157.2L919.6 160.6L916.9 164.0L914.4 167.4L915.3 170.8L917.8 174.3L920.6 177.7L923.4 181.1L926.3 184.5M941.0 156.7L938.6 159.6L936.2 162.4L933.9 165.3L931.8 168.1L931.1 171.0L933.1 173.8L935.4 176.7L937.7 179.5L940.1 182.4L942.6 185.2M947.2 153.5L944.4 156.7L941.6 160.0L938.9 163.3L936.3 166.5L934.0 169.8L935.7 173.1L938.3 176.4L940.9 179.6L943.7 182.9L946.6 186.2" stroke="#ff0" stroke-width="1.8" fill="none" stroke-dasharray="1 1"/>
</g>
<path d="M518.5 87V335M510 87.5H518M514 94.5H518M514 101.5H518M514 108.5H518M514 115.5H518M510 122.5H518M514 129.5H518M514 136.5H518M514 143.5H518M514 150.5H518M510 157.5H518M514 164.5H518M514 171.5H518M514 179.5H518M514 186.5H518M510 193.5H518M514 200.5H518M514 207.5H518M514 214.5H518M514 221.5H518M510 228.5H518M514 235.5H518M514 242.5H518M514 249.5H518M514 256.5H518M510 263.5H518M514 270.5H518M514 277.5H518M514 284.5H518M514 291.5H518M510 298.5H518M514 306.5H518M514 313.5H518M514 320.5H518M514 327.5H518M510 334.5H518M527 343.5H976M527.5 343V351M543.5 343V347M559.5 343V349M575.5 343V347M591.5 343V351M607.5 343V347M623.5 343V349M639.5 343V347M655.5 343V351M671.5 343V347M687.5 343V349M703.5 343V347M719.5 343V351M735.5 343V347M751.5 343V349M767.5 343V347M783.5 343V351M799.5 343V347M815.5 343V349M831.5 343V347M847.5 343V351M863.5 343V347M879.5 343V349M895.5 343V347M911.5 343V351M927.5 343V347M943.5 343V349M959.5 343V347M975.5 343V351" stroke="#000" stroke-width="1" fill="none"/>
<text x="504.5" y="92.8" text-anchor="end" font-size="14.83" fill="#000" textLength="22.27" lengthAdjust="spacingAndGlyphs">0.3</text>
<text x="504.5" y="127.8" text-anchor="end" font-size="14.83" fill="#000" textLength="31.17" lengthAdjust="spacingAndGlyphs">0.25</text>
<text x="504.5" y="162.8" text-anchor="end" font-size="14.83" fill="#000" textLength="22.27" lengthAdjust="spacingAndGlyphs">0.2</text>
<text x="504.5" y="198.8" text-anchor="end" font-size="14.83" fill="#000" textLength="31.17" lengthAdjust="spacingAndGlyphs">0.15</text>
<text x="504.5" y="233.8" text-anchor="end" font-size="14.83" fill="#000" textLength="22.27" lengthAdjust="spacingAndGlyphs">0.1</text>
<text x="504.5" y="268.8" text-anchor="end" font-size="14.83" fill="#000" textLength="31.17" lengthAdjust="spacingAndGlyphs">0.05</text>
<text x="504.5" y="303.8" text-anchor="end" font-size="14.83" fill="#000" textLength="8.92" lengthAdjust="spacingAndGlyphs">0</text>
<text x="504.5" y="339.8" text-anchor="end" font-size="14.83" fill="#000" textLength="36.23" lengthAdjust="spacingAndGlyphs">-0.05</text>
<text x="527.5" y="367" text-anchor="middle" font-size="14.83" fill="#000" textLength="22.27" lengthAdjust="spacingAndGlyphs">5.8</text>
<text x="591.5" y="367" text-anchor="middle" font-size="14.83" fill="#000" textLength="8.92" lengthAdjust="spacingAndGlyphs">6</text>
<text x="655.5" y="367" text-anchor="middle" font-size="14.83" fill="#000" textLength="22.27" lengthAdjust="spacingAndGlyphs">6.2</text>
<text x="719.5" y="367" text-anchor="middle" font-size="14.83" fill="#000" textLength="22.27" lengthAdjust="spacingAndGlyphs">6.4</text>
<text x="783.5" y="367" text-anchor="middle" font-size="14.83" fill="#000" textLength="22.27" lengthAdjust="spacingAndGlyphs">6.6</text>
<text x="847.5" y="367" text-anchor="middle" font-size="14.83" fill="#000" textLength="22.27" lengthAdjust="spacingAndGlyphs">6.8</text>
<text x="911.5" y="367" text-anchor="middle" font-size="14.83" fill="#000" textLength="8.92" lengthAdjust="spacingAndGlyphs">7</text>
<text x="975.5" y="367" text-anchor="middle" font-size="14.83" fill="#000" textLength="22.27" lengthAdjust="spacingAndGlyphs">7.2</text>
<text x="753.5" y="69.5" text-anchor="middle" font-size="21.6" font-weight="bold" fill="#000" textLength="417.94" lengthAdjust="spacingAndGlyphs">Experimental and Simulated Data</text>
<text transform="translate(461.8,211.5) rotate(-90)" text-anchor="middle" font-size="16.95" font-weight="bold" fill="#000" textLength="202.84" lengthAdjust="spacingAndGlyphs">Absorbance at 260 nm</text>
<text x="750.6" y="384.8" text-anchor="middle" font-size="16.95" font-weight="bold" fill="#000" textLength="107.33" lengthAdjust="spacingAndGlyphs">Radius (cm)</text></svg>
<svg class="ps" style="left:424px;top:401px" width="573" height="241" viewBox="424 401 573 241"><rect x="517" y="443" width="470" height="140" fill="#fff"/>
<path d="M517 443H987v2H519V583H517z" fill="#a0a0a0"/>
<rect x="519" y="445" width="466" height="136" fill="#000"/>
<path d="M531.5 445V580M551.5 445V580M571.5 445V580M591.5 445V580M611.5 445V580M631.5 445V580M652.5 445V580M672.5 445V580M692.5 445V580M712.5 445V580M732.5 445V580M752.5 445V580M772.5 445V580M792.5 445V580M812.5 445V580M832.5 445V580M853.5 445V580M873.5 445V580M893.5 445V580M913.5 445V580M933.5 445V580M953.5 445V580M973.5 445V580" stroke="#fff" stroke-width="1" stroke-dasharray="1 2" fill="none"/><path d="M519 449.5H984M519 467.5H984M519 485.5H984M519 503.5H984M519 522.5H984M519 540.5H984M519 558.5H984M519 576.5H984" stroke="#fff" stroke-width="1" stroke-dasharray="1 2" fill="none"/>
<path d="M531.5 486V522M532.5 486V519M533.5 484V522M534.5 487V520M535.5 484V520M536.5 487V522M537.5 485V521M538.5 486V520M539.5 484V520M540.5 485V521M541.5 485V521M542.5 486V521M543.5 486V520M544.5 486V518M545.5 486V520M546.5 484V518M547.5 487V521M548.5 487V521M549.5 487V519M550.5 484V522M551.5 487V522M552.5 487V519M553.5 485V520M554.5 485V522M555.5 486V518M556.5 485V521M557.5 485V520M558.5 486V521M559.5 484V520M560.5 484V522M561.5 487V520M562.5 487V522M563.5 485V520M564.5 485V519M565.5 485V521M566.5 484V519M567.5 485V519M568.5 486V521M569.5 486V519M570.5 486V523M571.5 484V521M572.5 484V521M573.5 486V521M574.5 484V520M575.5 486V522M576.5 487V520M577.5 485V520M578.5 484V521M579.5 487V523M580.5 487V521M581.5 485V520M582.5 486V520M583.5 487V522M584.5 483V522M585.5 487V521M586.5 484V521M587.5 486V521M588.5 485V520M589.5 485V521M590.5 486V521M591.5 486V521M592.5 484V520M593.5 483V521M594.5 486V523M595.5 486V522M596.5 484V519M597.5 487V520M598.5 485V520M599.5 488V519M600.5 486V522M601.5 486V522M602.5 486V523M603.5 484V520M604.5 485V521M605.5 486V521M606.5 486V522M607.5 484V521M608.5 487V519M609.5 485V520M610.5 485V520M611.5 485V520M612.5 485V521M613.5 485V523M614.5 486V519M615.5 485V519M616.5 485V520M617.5 484V520M618.5 487V519M619.5 486V521M620.5 485V521M621.5 486V521M622.5 486V522M623.5 486V520M624.5 484V521M625.5 486V519M626.5 486V519M627.5 486V520M628.5 485V522M629.5 487V522M630.5 485V521M631.5 485V520M632.5 487V521M633.5 485V521M634.5 487V523M635.5 486V522M636.5 484V521M637.5 486V520M638.5 487V521M639.5 487V519M640.5 485V519M641.5 485V519M642.5 486V520M643.5 484V520M644.5 485V521M645.5 486V520M646.5 486V520M647.5 486V521M648.5 486V521M649.5 486V519M650.5 486V522M651.5 484V522M652.5 485V521M653.5 486V522M654.5 487V520M655.5 485V520M656.5 487V522M657.5 483V522M658.5 484V520M659.5 486V520M660.5 484V522M661.5 487V520M662.5 485V523M663.5 484V519M664.5 487V520M665.5 486V519M666.5 487V519M667.5 486V520M668.5 484V517M669.5 486V522M670.5 484V521M671.5 485V521M672.5 486V520M673.5 486V522M674.5 486V521M675.5 487V520M676.5 486V520M677.5 487V522M678.5 486V520M679.5 487V521M680.5 485V522M681.5 484V519M682.5 484V521M683.5 485V521M684.5 485V523M685.5 486V520M686.5 486V517M687.5 485V523M688.5 486V522M689.5 486V519M690.5 485V521M691.5 485V522M692.5 486V520M693.5 485V518M694.5 489V522M695.5 485V520M696.5 485V518M697.5 485V522M698.5 486V521M699.5 486V520M700.5 483V521M701.5 484V520M702.5 485V519M703.5 484V520M704.5 485V521M705.5 488V520M706.5 485V520M707.5 484V522M708.5 486V520M709.5 485V521M710.5 484V520M711.5 487V523M712.5 487V519M713.5 487V522M714.5 486V520M715.5 485V522M716.5 484V522M717.5 486V519M718.5 485V521M719.5 487V521M720.5 486V519M721.5 486V522M722.5 486V518M723.5 486V522M724.5 486V522M725.5 487V521M726.5 487V520M727.5 486V518M728.5 484V522M729.5 484V520M730.5 487V522M731.5 485V519M732.5 485V522M733.5 486V520M734.5 486V521M735.5 486V522M736.5 485V522M737.5 487V520M738.5 487V519M739.5 483V520M740.5 486V520M741.5 486V520M742.5 487V522M743.5 488V519M744.5 485V521M745.5 486V522M746.5 486V519M747.5 486V519M748.5 488V521M749.5 486V520M750.5 487V520M751.5 487V519M752.5 485V520M753.5 485V521M754.5 484V520M755.5 484V518M756.5 484V519M757.5 485V519M758.5 484V519M759.5 485V520M760.5 487V520M761.5 486V521M762.5 484V521M763.5 484V519M764.5 484V520M765.5 485V521M766.5 485V519M767.5 484V520M768.5 484V521M769.5 487V521M770.5 488V521M771.5 485V518M772.5 486V520M773.5 486V523M774.5 484V521M775.5 485V521M776.5 485V523M777.5 488V519M778.5 483V519M779.5 486V522M780.5 484V521M781.5 486V520M782.5 487V520M783.5 487V521M784.5 485V521M785.5 485V518M786.5 485V521M787.5 484V519M788.5 485V522M789.5 486V519M790.5 486V520M791.5 486V520M792.5 484V521M793.5 487V522M794.5 488V520M795.5 485V519M796.5 488V520M797.5 486V520M798.5 483V519M799.5 487V519M800.5 487V520M801.5 484V520M802.5 484V524M803.5 485V519M804.5 484V520M805.5 485V522M806.5 486V522M807.5 487V521M808.5 485V519M809.5 488V520M810.5 486V520M811.5 487V519M812.5 485V522M813.5 483V521M814.5 484V521M815.5 485V520M816.5 485V523M817.5 485V518M818.5 486V518M819.5 483V519M820.5 486V521M821.5 485V520M822.5 486V518M823.5 486V521M824.5 484V522M825.5 486V520M826.5 486V521M827.5 486V519M828.5 484V521M829.5 485V519M830.5 485V520M831.5 487V521M832.5 488V520M833.5 487V520M834.5 485V520M835.5 486V522M836.5 483V519M837.5 485V522M838.5 485V522M839.5 485V521M840.5 485V520M841.5 486V521M842.5 485V520M843.5 485V520M844.5 485V519M845.5 486V521M846.5 485V521M847.5 484V520M848.5 486V520M849.5 488V519M850.5 486V519M851.5 485V522M852.5 484V522M853.5 484V522M854.5 486V518M855.5 487V520M856.5 486V522M857.5 485V521M858.5 485V522M859.5 484V520M860.5 487V521M861.5 484V520M862.5 487V521M863.5 485V521M864.5 485V518M865.5 486V520M866.5 484V521M867.5 486V522M868.5 484V519M869.5 484V520M870.5 485V524M871.5 484V520M872.5 485V521M873.5 485V520M874.5 487V520M875.5 484V520M876.5 486V518M877.5 486V521M878.5 486V519M879.5 485V519M880.5 486V519M881.5 484V522M882.5 485V519M883.5 486V522M884.5 483V521M885.5 484V522M886.5 485V524M887.5 485V522M888.5 486V518M889.5 485V520M890.5 486V521M891.5 485V522M892.5 485V521M893.5 486V519M894.5 486V520M895.5 488V521M896.5 485V521M897.5 485V522M898.5 484V520M899.5 487V522M900.5 486V521M901.5 484V519M902.5 487V519M903.5 485V522M904.5 485V522M905.5 486V523M906.5 486V519M907.5 486V521M908.5 484V521M909.5 483V521M910.5 486V521M911.5 487V521M912.5 485V520M913.5 487V521M914.5 486V519M915.5 485V519M916.5 487V519M917.5 487V519M918.5 485V520M919.5 485V519M920.5 488V521M921.5 485V520M922.5 486V521M923.5 487V521M924.5 485V522M925.5 487V521M926.5 487V521M927.5 486V519M928.5 486V522M929.5 487V522M930.5 485V520M931.5 488V522M932.5 486V519M933.5 486V519M934.5 484V520M935.5 486V519M936.5 487V523M937.5 487V521M938.5 487V523M939.5 484V520M940.5 487V521M941.5 485V518M942.5 487V521M943.5 486V521M944.5 484V520M945.5 487V520M946.5 487V519M947.5 485V520M948.5 485V520M949.5 487V520M950.5 485V520M951.5 487V521M952.5 486V520M953.5 483V520M954.5 485V519M955.5 486V522M956.5 486V522M957.5 485V522M958.5 483V521M959.5 486V523M960.5 484V522M961.5 486V522M962.5 485V521M963.5 485V521M964.5 483V521M965.5 486V522M966.5 487V521M967.5 484V524M968.5 482V522M969.5 484V523M970.5 486V523M971.5 484V524M972.5 484V524" stroke="#0f0" stroke-width="1"/>
<path d="M531 489h1v1h-1zM531 518h1v1h-1zM532 486h1v1h-1zM533 520h1v1h-1zM534 490h1v1h-1zM534 491h1v1h-1zM534 519h1v1h-1zM534 517h1v1h-1zM535 484h1v1h-1zM535 519h1v1h-1zM536 488h1v1h-1zM536 491h1v1h-1zM536 518h1v1h-1zM537 519h1v1h-1zM537 520h1v1h-1zM539 485h1v1h-1zM539 486h1v1h-1zM539 515h1v1h-1zM540 489h1v1h-1zM540 488h1v1h-1zM540 517h1v1h-1zM541 517h1v1h-1zM542 490h1v1h-1zM542 516h1v1h-1zM543 488h1v1h-1zM543 517h1v1h-1zM544 486h1v1h-1zM544 517h1v1h-1zM545 488h1v1h-1zM545 487h1v1h-1zM546 487h1v1h-1zM546 513h1v1h-1zM547 488h1v1h-1zM547 488h1v1h-1zM547 516h1v1h-1zM548 487h1v1h-1zM548 489h1v1h-1zM549 517h1v1h-1zM549 517h1v1h-1zM550 485h1v1h-1zM550 521h1v1h-1zM550 519h1v1h-1zM551 487h1v1h-1zM551 488h1v1h-1zM551 520h1v1h-1zM552 490h1v1h-1zM552 491h1v1h-1zM552 516h1v1h-1zM552 517h1v1h-1zM553 518h1v1h-1zM553 519h1v1h-1zM554 489h1v1h-1zM554 519h1v1h-1zM554 518h1v1h-1zM555 487h1v1h-1zM555 517h1v1h-1zM556 486h1v1h-1zM556 485h1v1h-1zM557 488h1v1h-1zM557 518h1v1h-1zM557 515h1v1h-1zM558 487h1v1h-1zM558 490h1v1h-1zM560 488h1v1h-1zM560 485h1v1h-1zM560 519h1v1h-1zM561 516h1v1h-1zM562 491h1v1h-1zM562 517h1v1h-1zM562 521h1v1h-1zM563 489h1v1h-1zM563 517h1v1h-1zM564 485h1v1h-1zM564 517h1v1h-1zM565 485h1v1h-1zM565 485h1v1h-1zM566 488h1v1h-1zM566 488h1v1h-1zM567 489h1v1h-1zM567 489h1v1h-1zM567 515h1v1h-1zM567 518h1v1h-1zM568 486h1v1h-1zM568 487h1v1h-1zM568 516h1v1h-1zM569 487h1v1h-1zM569 489h1v1h-1zM569 516h1v1h-1zM569 515h1v1h-1zM571 487h1v1h-1zM571 519h1v1h-1zM572 488h1v1h-1zM572 516h1v1h-1zM572 520h1v1h-1zM573 487h1v1h-1zM573 486h1v1h-1zM573 520h1v1h-1zM574 487h1v1h-1zM574 484h1v1h-1zM574 516h1v1h-1zM575 488h1v1h-1zM576 488h1v1h-1zM576 518h1v1h-1zM577 486h1v1h-1zM577 488h1v1h-1zM577 516h1v1h-1zM577 516h1v1h-1zM578 487h1v1h-1zM578 520h1v1h-1zM579 520h1v1h-1zM580 516h1v1h-1zM580 517h1v1h-1zM581 519h1v1h-1zM582 486h1v1h-1zM582 518h1v1h-1zM583 491h1v1h-1zM583 487h1v1h-1zM583 520h1v1h-1zM584 484h1v1h-1zM584 521h1v1h-1zM584 517h1v1h-1zM585 488h1v1h-1zM586 487h1v1h-1zM586 486h1v1h-1zM586 518h1v1h-1zM588 517h1v1h-1zM589 518h1v1h-1zM589 517h1v1h-1zM590 490h1v1h-1zM590 517h1v1h-1zM591 486h1v1h-1zM591 488h1v1h-1zM591 519h1v1h-1zM592 484h1v1h-1zM592 516h1v1h-1zM593 483h1v1h-1zM593 485h1v1h-1zM594 519h1v1h-1zM595 486h1v1h-1zM595 520h1v1h-1zM596 485h1v1h-1zM596 485h1v1h-1zM596 517h1v1h-1zM596 517h1v1h-1zM597 489h1v1h-1zM597 487h1v1h-1zM597 516h1v1h-1zM598 489h1v1h-1zM598 519h1v1h-1zM599 518h1v1h-1zM600 490h1v1h-1zM600 521h1v1h-1zM601 489h1v1h-1zM601 487h1v1h-1zM601 519h1v1h-1zM602 489h1v1h-1zM602 520h1v1h-1zM602 522h1v1h-1zM603 515h1v1h-1zM604 486h1v1h-1zM604 517h1v1h-1zM605 490h1v1h-1zM605 519h1v1h-1zM605 517h1v1h-1zM606 486h1v1h-1zM606 486h1v1h-1zM606 520h1v1h-1zM607 488h1v1h-1zM607 487h1v1h-1zM608 489h1v1h-1zM608 518h1v1h-1zM608 517h1v1h-1zM609 518h1v1h-1zM610 485h1v1h-1zM610 518h1v1h-1zM611 486h1v1h-1zM611 485h1v1h-1zM611 515h1v1h-1zM612 487h1v1h-1zM614 514h1v1h-1zM615 488h1v1h-1zM616 488h1v1h-1zM616 516h1v1h-1zM616 515h1v1h-1zM617 484h1v1h-1zM617 518h1v1h-1zM617 515h1v1h-1zM618 490h1v1h-1zM618 517h1v1h-1zM619 488h1v1h-1zM619 520h1v1h-1zM620 519h1v1h-1zM621 520h1v1h-1zM621 520h1v1h-1zM623 518h1v1h-1zM624 518h1v1h-1zM624 518h1v1h-1zM625 486h1v1h-1zM625 490h1v1h-1zM625 518h1v1h-1zM625 515h1v1h-1zM626 486h1v1h-1zM627 488h1v1h-1zM627 490h1v1h-1zM627 517h1v1h-1zM628 488h1v1h-1zM628 521h1v1h-1zM629 489h1v1h-1zM629 488h1v1h-1zM629 519h1v1h-1zM630 486h1v1h-1zM630 485h1v1h-1zM630 517h1v1h-1zM631 486h1v1h-1zM631 489h1v1h-1zM631 518h1v1h-1zM632 490h1v1h-1zM632 520h1v1h-1zM633 519h1v1h-1zM634 519h1v1h-1zM635 487h1v1h-1zM635 488h1v1h-1zM635 519h1v1h-1zM636 486h1v1h-1zM637 488h1v1h-1zM637 518h1v1h-1zM637 516h1v1h-1zM638 488h1v1h-1zM638 520h1v1h-1zM639 488h1v1h-1zM639 490h1v1h-1zM639 517h1v1h-1zM640 486h1v1h-1zM640 518h1v1h-1zM640 517h1v1h-1zM641 488h1v1h-1zM642 486h1v1h-1zM642 515h1v1h-1zM643 487h1v1h-1zM643 515h1v1h-1zM643 519h1v1h-1zM644 487h1v1h-1zM644 488h1v1h-1zM644 518h1v1h-1zM645 488h1v1h-1zM645 518h1v1h-1zM646 486h1v1h-1zM646 519h1v1h-1zM647 490h1v1h-1zM648 490h1v1h-1zM648 519h1v1h-1zM649 490h1v1h-1zM649 518h1v1h-1zM650 488h1v1h-1zM650 488h1v1h-1zM650 518h1v1h-1zM651 484h1v1h-1zM651 519h1v1h-1zM652 486h1v1h-1zM652 485h1v1h-1zM652 517h1v1h-1zM652 519h1v1h-1zM653 518h1v1h-1zM653 521h1v1h-1zM654 491h1v1h-1zM655 515h1v1h-1zM656 521h1v1h-1zM656 517h1v1h-1zM657 486h1v1h-1zM657 486h1v1h-1zM657 520h1v1h-1zM658 486h1v1h-1zM659 488h1v1h-1zM659 490h1v1h-1zM659 517h1v1h-1zM660 488h1v1h-1zM661 490h1v1h-1zM661 516h1v1h-1zM662 487h1v1h-1zM662 486h1v1h-1zM662 520h1v1h-1zM663 485h1v1h-1zM663 486h1v1h-1zM663 517h1v1h-1zM664 487h1v1h-1zM664 517h1v1h-1zM665 487h1v1h-1zM665 518h1v1h-1zM666 514h1v1h-1zM667 486h1v1h-1zM667 516h1v1h-1zM668 486h1v1h-1zM668 488h1v1h-1zM668 513h1v1h-1zM669 489h1v1h-1zM669 487h1v1h-1zM669 518h1v1h-1zM670 484h1v1h-1zM670 518h1v1h-1zM671 489h1v1h-1zM671 485h1v1h-1zM671 519h1v1h-1zM672 486h1v1h-1zM672 518h1v1h-1zM673 490h1v1h-1zM674 490h1v1h-1zM674 490h1v1h-1zM674 519h1v1h-1zM675 490h1v1h-1zM676 489h1v1h-1zM676 487h1v1h-1zM676 516h1v1h-1zM676 517h1v1h-1zM677 487h1v1h-1zM678 488h1v1h-1zM678 490h1v1h-1zM678 516h1v1h-1zM678 517h1v1h-1zM679 487h1v1h-1zM679 491h1v1h-1zM679 519h1v1h-1zM680 485h1v1h-1zM680 518h1v1h-1zM680 518h1v1h-1zM681 488h1v1h-1zM682 519h1v1h-1zM683 486h1v1h-1zM683 488h1v1h-1zM683 518h1v1h-1zM683 519h1v1h-1zM684 487h1v1h-1zM684 522h1v1h-1zM684 522h1v1h-1zM685 516h1v1h-1zM685 517h1v1h-1zM686 489h1v1h-1zM686 512h1v1h-1zM687 486h1v1h-1zM688 489h1v1h-1zM688 486h1v1h-1zM688 521h1v1h-1zM689 487h1v1h-1zM689 489h1v1h-1zM689 517h1v1h-1zM690 486h1v1h-1zM691 489h1v1h-1zM692 519h1v1h-1zM693 488h1v1h-1zM693 514h1v1h-1zM693 515h1v1h-1zM694 489h1v1h-1zM695 489h1v1h-1zM695 489h1v1h-1zM695 517h1v1h-1zM695 516h1v1h-1zM696 485h1v1h-1zM696 515h1v1h-1zM697 489h1v1h-1zM697 517h1v1h-1zM698 489h1v1h-1zM698 520h1v1h-1zM699 516h1v1h-1zM700 483h1v1h-1zM700 518h1v1h-1zM700 519h1v1h-1zM701 516h1v1h-1zM702 489h1v1h-1zM702 486h1v1h-1zM703 484h1v1h-1zM703 518h1v1h-1zM704 488h1v1h-1zM704 519h1v1h-1zM705 488h1v1h-1zM705 518h1v1h-1zM706 487h1v1h-1zM706 516h1v1h-1zM707 486h1v1h-1zM708 490h1v1h-1zM708 518h1v1h-1zM708 515h1v1h-1zM710 487h1v1h-1zM710 516h1v1h-1zM710 515h1v1h-1zM711 490h1v1h-1zM711 488h1v1h-1zM711 518h1v1h-1zM712 515h1v1h-1zM713 489h1v1h-1zM713 489h1v1h-1zM713 521h1v1h-1zM713 519h1v1h-1zM714 489h1v1h-1zM714 519h1v1h-1zM715 488h1v1h-1zM715 518h1v1h-1zM716 488h1v1h-1zM716 517h1v1h-1zM717 490h1v1h-1zM717 486h1v1h-1zM717 517h1v1h-1zM717 518h1v1h-1zM718 489h1v1h-1zM718 487h1v1h-1zM718 517h1v1h-1zM718 518h1v1h-1zM719 491h1v1h-1zM720 490h1v1h-1zM721 488h1v1h-1zM721 489h1v1h-1zM723 486h1v1h-1zM723 490h1v1h-1zM723 520h1v1h-1zM723 517h1v1h-1zM724 518h1v1h-1zM724 517h1v1h-1zM725 491h1v1h-1zM725 488h1v1h-1zM725 520h1v1h-1zM726 488h1v1h-1zM726 517h1v1h-1zM727 516h1v1h-1zM728 517h1v1h-1zM729 518h1v1h-1zM729 519h1v1h-1zM730 487h1v1h-1zM730 489h1v1h-1zM730 518h1v1h-1zM732 485h1v1h-1zM732 487h1v1h-1zM733 486h1v1h-1zM733 487h1v1h-1zM733 517h1v1h-1zM734 488h1v1h-1zM735 489h1v1h-1zM735 517h1v1h-1zM735 521h1v1h-1zM736 486h1v1h-1zM737 487h1v1h-1zM737 489h1v1h-1zM737 517h1v1h-1zM738 489h1v1h-1zM738 514h1v1h-1zM739 486h1v1h-1zM739 519h1v1h-1zM740 489h1v1h-1zM740 519h1v1h-1zM740 517h1v1h-1zM741 490h1v1h-1zM741 489h1v1h-1zM741 518h1v1h-1zM741 518h1v1h-1zM742 489h1v1h-1zM742 490h1v1h-1zM743 492h1v1h-1zM745 486h1v1h-1zM745 521h1v1h-1zM745 517h1v1h-1zM746 516h1v1h-1zM747 486h1v1h-1zM747 488h1v1h-1zM747 517h1v1h-1zM747 515h1v1h-1zM748 492h1v1h-1zM748 519h1v1h-1zM748 517h1v1h-1zM749 487h1v1h-1zM749 518h1v1h-1zM750 491h1v1h-1zM750 515h1v1h-1zM750 516h1v1h-1zM751 515h1v1h-1zM752 518h1v1h-1zM753 486h1v1h-1zM753 485h1v1h-1zM753 520h1v1h-1zM754 519h1v1h-1zM755 486h1v1h-1zM755 515h1v1h-1zM756 485h1v1h-1zM756 516h1v1h-1zM757 518h1v1h-1zM758 487h1v1h-1zM758 486h1v1h-1zM759 487h1v1h-1zM760 490h1v1h-1zM760 519h1v1h-1zM761 486h1v1h-1zM762 487h1v1h-1zM762 517h1v1h-1zM762 517h1v1h-1zM763 488h1v1h-1zM764 516h1v1h-1zM766 488h1v1h-1zM766 485h1v1h-1zM766 516h1v1h-1zM767 485h1v1h-1zM768 484h1v1h-1zM768 520h1v1h-1zM769 487h1v1h-1zM769 487h1v1h-1zM769 520h1v1h-1zM769 517h1v1h-1zM770 516h1v1h-1zM771 487h1v1h-1zM771 516h1v1h-1zM771 516h1v1h-1zM772 488h1v1h-1zM772 489h1v1h-1zM772 516h1v1h-1zM772 515h1v1h-1zM773 488h1v1h-1zM773 518h1v1h-1zM774 484h1v1h-1zM774 485h1v1h-1zM774 516h1v1h-1zM775 487h1v1h-1zM775 517h1v1h-1zM777 490h1v1h-1zM777 515h1v1h-1zM777 516h1v1h-1zM778 518h1v1h-1zM779 487h1v1h-1zM779 486h1v1h-1zM779 519h1v1h-1zM779 517h1v1h-1zM780 485h1v1h-1zM780 487h1v1h-1zM781 486h1v1h-1zM781 518h1v1h-1zM781 517h1v1h-1zM782 487h1v1h-1zM782 519h1v1h-1zM783 487h1v1h-1zM784 485h1v1h-1zM784 517h1v1h-1zM785 489h1v1h-1zM786 485h1v1h-1zM786 517h1v1h-1zM787 484h1v1h-1zM787 485h1v1h-1zM788 486h1v1h-1zM788 485h1v1h-1zM788 520h1v1h-1zM788 520h1v1h-1zM789 488h1v1h-1zM789 516h1v1h-1zM789 518h1v1h-1zM791 489h1v1h-1zM791 519h1v1h-1zM792 485h1v1h-1zM792 486h1v1h-1zM792 518h1v1h-1zM792 520h1v1h-1zM793 491h1v1h-1zM793 490h1v1h-1zM794 490h1v1h-1zM795 515h1v1h-1zM796 518h1v1h-1zM797 487h1v1h-1zM797 519h1v1h-1zM798 483h1v1h-1zM798 518h1v1h-1zM799 491h1v1h-1zM799 518h1v1h-1zM800 487h1v1h-1zM800 517h1v1h-1zM801 484h1v1h-1zM801 518h1v1h-1zM802 487h1v1h-1zM802 521h1v1h-1zM803 487h1v1h-1zM803 488h1v1h-1zM803 517h1v1h-1zM804 486h1v1h-1zM805 489h1v1h-1zM805 488h1v1h-1zM805 520h1v1h-1zM806 486h1v1h-1zM806 520h1v1h-1zM807 488h1v1h-1zM807 488h1v1h-1zM807 517h1v1h-1zM809 489h1v1h-1zM809 489h1v1h-1zM809 516h1v1h-1zM810 489h1v1h-1zM811 515h1v1h-1zM812 487h1v1h-1zM812 517h1v1h-1zM813 519h1v1h-1zM815 486h1v1h-1zM815 516h1v1h-1zM815 515h1v1h-1zM816 486h1v1h-1zM816 518h1v1h-1zM816 518h1v1h-1zM817 513h1v1h-1zM818 514h1v1h-1zM818 517h1v1h-1zM819 514h1v1h-1zM819 514h1v1h-1zM820 488h1v1h-1zM820 486h1v1h-1zM820 516h1v1h-1zM821 515h1v1h-1zM821 516h1v1h-1zM822 490h1v1h-1zM822 490h1v1h-1zM822 517h1v1h-1zM823 488h1v1h-1zM823 516h1v1h-1zM824 485h1v1h-1zM824 517h1v1h-1zM824 520h1v1h-1zM825 515h1v1h-1zM825 518h1v1h-1zM826 488h1v1h-1zM827 486h1v1h-1zM827 516h1v1h-1zM828 485h1v1h-1zM828 516h1v1h-1zM829 514h1v1h-1zM830 486h1v1h-1zM831 491h1v1h-1zM831 520h1v1h-1zM832 492h1v1h-1zM832 518h1v1h-1zM834 488h1v1h-1zM834 518h1v1h-1zM834 518h1v1h-1zM835 487h1v1h-1zM835 490h1v1h-1zM835 518h1v1h-1zM836 487h1v1h-1zM837 486h1v1h-1zM837 519h1v1h-1zM837 521h1v1h-1zM839 489h1v1h-1zM839 488h1v1h-1zM839 519h1v1h-1zM840 487h1v1h-1zM840 518h1v1h-1zM841 520h1v1h-1zM841 517h1v1h-1zM842 485h1v1h-1zM842 485h1v1h-1zM842 515h1v1h-1zM843 485h1v1h-1zM843 517h1v1h-1zM844 485h1v1h-1zM847 485h1v1h-1zM847 517h1v1h-1zM847 517h1v1h-1zM848 488h1v1h-1zM848 487h1v1h-1zM848 517h1v1h-1zM849 516h1v1h-1zM850 490h1v1h-1zM851 488h1v1h-1zM851 485h1v1h-1zM851 520h1v1h-1zM851 521h1v1h-1zM852 487h1v1h-1zM852 488h1v1h-1zM853 487h1v1h-1zM853 519h1v1h-1zM853 520h1v1h-1zM854 517h1v1h-1zM856 488h1v1h-1zM856 521h1v1h-1zM857 487h1v1h-1zM858 489h1v1h-1zM858 518h1v1h-1zM858 521h1v1h-1zM859 487h1v1h-1zM860 520h1v1h-1zM860 517h1v1h-1zM861 484h1v1h-1zM861 485h1v1h-1zM861 519h1v1h-1zM862 516h1v1h-1zM862 519h1v1h-1zM864 486h1v1h-1zM864 517h1v1h-1zM866 518h1v1h-1zM866 517h1v1h-1zM867 486h1v1h-1zM867 518h1v1h-1zM868 488h1v1h-1zM868 487h1v1h-1zM868 518h1v1h-1zM868 517h1v1h-1zM869 484h1v1h-1zM869 515h1v1h-1zM870 489h1v1h-1zM870 486h1v1h-1zM871 485h1v1h-1zM871 519h1v1h-1zM871 515h1v1h-1zM872 518h1v1h-1zM873 485h1v1h-1zM873 486h1v1h-1zM874 491h1v1h-1zM874 490h1v1h-1zM875 486h1v1h-1zM875 484h1v1h-1zM875 519h1v1h-1zM876 489h1v1h-1zM876 516h1v1h-1zM877 487h1v1h-1zM877 489h1v1h-1zM878 515h1v1h-1zM879 486h1v1h-1zM879 518h1v1h-1zM880 487h1v1h-1zM880 517h1v1h-1zM880 517h1v1h-1zM881 484h1v1h-1zM881 518h1v1h-1zM882 518h1v1h-1zM883 486h1v1h-1zM884 486h1v1h-1zM884 519h1v1h-1zM885 484h1v1h-1zM885 484h1v1h-1zM885 519h1v1h-1zM885 518h1v1h-1zM886 487h1v1h-1zM886 519h1v1h-1zM886 519h1v1h-1zM887 488h1v1h-1zM887 520h1v1h-1zM888 514h1v1h-1zM889 489h1v1h-1zM889 517h1v1h-1zM890 487h1v1h-1zM890 518h1v1h-1zM890 516h1v1h-1zM891 488h1v1h-1zM891 517h1v1h-1zM892 488h1v1h-1zM892 516h1v1h-1zM893 488h1v1h-1zM893 518h1v1h-1zM893 514h1v1h-1zM894 518h1v1h-1zM895 516h1v1h-1zM896 485h1v1h-1zM896 520h1v1h-1zM896 520h1v1h-1zM897 521h1v1h-1zM898 517h1v1h-1zM899 487h1v1h-1zM899 519h1v1h-1zM900 519h1v1h-1zM901 485h1v1h-1zM901 518h1v1h-1zM902 487h1v1h-1zM902 488h1v1h-1zM902 517h1v1h-1zM902 517h1v1h-1zM903 487h1v1h-1zM903 517h1v1h-1zM903 519h1v1h-1zM904 519h1v1h-1zM905 520h1v1h-1zM906 517h1v1h-1zM906 514h1v1h-1zM907 487h1v1h-1zM907 488h1v1h-1zM907 520h1v1h-1zM908 520h1v1h-1zM909 517h1v1h-1zM909 516h1v1h-1zM910 490h1v1h-1zM910 488h1v1h-1zM910 517h1v1h-1zM911 487h1v1h-1zM911 516h1v1h-1zM912 487h1v1h-1zM913 490h1v1h-1zM913 518h1v1h-1zM914 489h1v1h-1zM914 487h1v1h-1zM914 515h1v1h-1zM914 514h1v1h-1zM915 489h1v1h-1zM915 514h1v1h-1zM917 491h1v1h-1zM917 491h1v1h-1zM917 514h1v1h-1zM918 486h1v1h-1zM919 515h1v1h-1zM920 516h1v1h-1zM921 488h1v1h-1zM921 485h1v1h-1zM921 519h1v1h-1zM921 518h1v1h-1zM922 487h1v1h-1zM922 520h1v1h-1zM923 488h1v1h-1zM923 516h1v1h-1zM923 516h1v1h-1zM924 517h1v1h-1zM925 491h1v1h-1zM925 490h1v1h-1zM925 516h1v1h-1zM926 490h1v1h-1zM926 518h1v1h-1zM927 488h1v1h-1zM927 518h1v1h-1zM928 518h1v1h-1zM929 487h1v1h-1zM929 487h1v1h-1zM929 518h1v1h-1zM929 521h1v1h-1zM930 516h1v1h-1zM932 490h1v1h-1zM932 489h1v1h-1zM932 514h1v1h-1zM932 515h1v1h-1zM933 489h1v1h-1zM933 487h1v1h-1zM933 517h1v1h-1zM933 515h1v1h-1zM934 486h1v1h-1zM934 484h1v1h-1zM934 517h1v1h-1zM935 514h1v1h-1zM936 491h1v1h-1zM936 489h1v1h-1zM936 520h1v1h-1zM936 521h1v1h-1zM937 488h1v1h-1zM937 491h1v1h-1zM937 520h1v1h-1zM938 519h1v1h-1zM939 484h1v1h-1zM939 519h1v1h-1zM940 488h1v1h-1zM940 487h1v1h-1zM940 518h1v1h-1zM941 485h1v1h-1zM941 513h1v1h-1zM942 518h1v1h-1zM942 519h1v1h-1zM943 488h1v1h-1zM943 520h1v1h-1zM943 520h1v1h-1zM944 485h1v1h-1zM944 517h1v1h-1zM944 516h1v1h-1zM945 488h1v1h-1zM945 518h1v1h-1zM945 517h1v1h-1zM946 489h1v1h-1zM947 487h1v1h-1zM947 518h1v1h-1zM948 488h1v1h-1zM948 517h1v1h-1zM948 518h1v1h-1zM949 491h1v1h-1zM949 490h1v1h-1zM949 515h1v1h-1zM949 519h1v1h-1zM950 485h1v1h-1zM950 519h1v1h-1zM951 490h1v1h-1zM951 518h1v1h-1zM951 518h1v1h-1zM953 483h1v1h-1zM954 489h1v1h-1zM954 515h1v1h-1zM955 487h1v1h-1zM956 488h1v1h-1zM956 486h1v1h-1zM956 517h1v1h-1zM958 485h1v1h-1zM958 486h1v1h-1zM958 517h1v1h-1zM959 522h1v1h-1zM960 485h1v1h-1zM960 486h1v1h-1zM961 490h1v1h-1zM962 518h1v1h-1zM962 518h1v1h-1zM963 486h1v1h-1zM963 518h1v1h-1zM963 517h1v1h-1zM964 486h1v1h-1zM964 518h1v1h-1zM965 490h1v1h-1zM965 488h1v1h-1zM965 519h1v1h-1zM967 485h1v1h-1zM967 487h1v1h-1zM967 521h1v1h-1zM967 522h1v1h-1zM968 484h1v1h-1zM968 517h1v1h-1zM969 484h1v1h-1zM969 487h1v1h-1zM969 518h1v1h-1zM970 519h1v1h-1zM970 521h1v1h-1zM971 487h1v1h-1zM972 485h1v1h-1zM972 484h1v1h-1zM972 522h1v1h-1z" fill="#000"/>
<path d="M545 523h1v1h-1zM631 522h1v1h-1zM597 483h1v1h-1zM792 481h1v1h-1zM778 521h1v1h-1zM789 481h1v1h-1zM750 522h1v1h-1zM802 521h1v1h-1zM546 526h1v1h-1zM596 482h1v1h-1zM896 482h1v1h-1zM679 483h1v1h-1zM632 482h1v1h-1zM714 521h1v1h-1zM841 481h1v1h-1zM760 483h1v1h-1zM815 482h1v1h-1zM785 483h1v1h-1zM611 521h1v1h-1zM546 483h1v1h-1zM851 522h1v1h-1zM930 479h1v1h-1zM906 479h1v1h-1zM667 483h1v1h-1zM777 522h1v1h-1zM958 523h1v1h-1zM826 524h1v1h-1zM540 479h1v1h-1zM548 525h1v1h-1zM575 481h1v1h-1zM883 482h1v1h-1zM723 521h1v1h-1zM598 521h1v1h-1zM903 483h1v1h-1zM724 483h1v1h-1zM575 523h1v1h-1zM959 481h1v1h-1zM950 522h1v1h-1zM691 482h1v1h-1zM892 483h1v1h-1zM551 478h1v1h-1zM911 481h1v1h-1zM954 521h1v1h-1zM666 482h1v1h-1zM535 482h1v1h-1zM972 521h1v1h-1zM874 525h1v1h-1zM718 523h1v1h-1zM763 524h1v1h-1zM604 522h1v1h-1zM903 522h1v1h-1zM605 521h1v1h-1zM870 481h1v1h-1zM769 476h1v1h-1zM787 483h1v1h-1zM549 480h1v1h-1zM859 521h1v1h-1zM839 523h1v1h-1zM830 524h1v1h-1zM940 524h1v1h-1zM725 480h1v1h-1zM893 482h1v1h-1zM832 521h1v1h-1zM597 482h1v1h-1zM587 483h1v1h-1zM802 521h1v1h-1zM669 524h1v1h-1zM839 523h1v1h-1zM756 483h1v1h-1zM713 482h1v1h-1zM589 521h1v1h-1zM629 522h1v1h-1zM869 523h1v1h-1zM595 482h1v1h-1zM862 483h1v1h-1zM744 482h1v1h-1zM849 521h1v1h-1zM942 521h1v1h-1zM635 521h1v1h-1zM610 483h1v1h-1zM802 482h1v1h-1zM832 521h1v1h-1zM935 481h1v1h-1zM629 482h1v1h-1zM787 521h1v1h-1zM932 522h1v1h-1zM916 483h1v1h-1zM646 480h1v1h-1zM634 481h1v1h-1zM556 521h1v1h-1zM832 482h1v1h-1zM587 481h1v1h-1zM550 483h1v1h-1zM913 481h1v1h-1zM596 524h1v1h-1zM936 525h1v1h-1zM553 482h1v1h-1zM909 483h1v1h-1zM903 477h1v1h-1zM702 522h1v1h-1zM559 521h1v1h-1zM804 483h1v1h-1zM966 521h1v1h-1zM704 523h1v1h-1zM779 524h1v1h-1zM594 481h1v1h-1zM850 522h1v1h-1zM780 477h1v1h-1zM817 521h1v1h-1zM803 523h1v1h-1zM605 482h1v1h-1zM586 483h1v1h-1zM790 523h1v1h-1zM811 522h1v1h-1zM827 483h1v1h-1zM930 482h1v1h-1zM704 481h1v1h-1zM896 481h1v1h-1zM812 524h1v1h-1zM546 482h1v1h-1zM594 521h1v1h-1zM591 524h1v1h-1zM859 480h1v1h-1zM795 521h1v1h-1zM627 477h1v1h-1zM702 523h1v1h-1zM930 522h1v1h-1zM911 522h1v1h-1zM666 522h1v1h-1zM785 483h1v1h-1zM689 480h1v1h-1zM814 525h1v1h-1zM616 523h1v1h-1zM898 524h1v1h-1zM666 523h1v1h-1zM754 483h1v1h-1zM904 522h1v1h-1zM826 482h1v1h-1zM857 479h1v1h-1zM720 522h1v1h-1zM917 523h1v1h-1zM573 481h1v1h-1zM753 480h1v1h-1zM886 480h1v1h-1zM752 521h1v1h-1zM854 521h1v1h-1zM959 524h1v1h-1zM931 483h1v1h-1zM741 481h1v1h-1zM861 523h1v1h-1zM556 481h1v1h-1zM585 480h1v1h-1zM878 481h1v1h-1zM808 524h1v1h-1zM879 483h1v1h-1zM537 482h1v1h-1zM915 482h1v1h-1zM722 526h1v1h-1zM838 527h1v1h-1zM671 482h1v1h-1zM557 482h1v1h-1zM616 521h1v1h-1zM725 525h1v1h-1zM822 478h1v1h-1zM557 522h1v1h-1zM812 522h1v1h-1zM578 482h1v1h-1zM786 483h1v1h-1zM866 523h1v1h-1zM907 481h1v1h-1zM828 478h1v1h-1zM576 521h1v1h-1zM577 480h1v1h-1zM712 524h1v1h-1zM633 483h1v1h-1zM564 522h1v1h-1zM965 523h1v1h-1zM572 482h1v1h-1zM591 482h1v1h-1zM601 527h1v1h-1zM547 522h1v1h-1zM652 483h1v1h-1zM615 522h1v1h-1zM585 480h1v1h-1zM653 483h1v1h-1zM924 524h1v1h-1zM746 523h1v1h-1zM758 524h1v1h-1zM848 521h1v1h-1zM698 523h1v1h-1zM889 528h1v1h-1zM551 525h1v1h-1zM635 522h1v1h-1zM917 478h1v1h-1zM638 522h1v1h-1zM556 523h1v1h-1zM835 480h1v1h-1zM692 482h1v1h-1zM802 522h1v1h-1zM630 523h1v1h-1zM956 523h1v1h-1zM825 522h1v1h-1zM952 481h1v1h-1zM638 526h1v1h-1zM599 482h1v1h-1zM864 479h1v1h-1zM690 481h1v1h-1zM575 481h1v1h-1zM756 483h1v1h-1zM570 525h1v1h-1zM751 481h1v1h-1zM881 482h1v1h-1zM858 523h1v1h-1zM665 480h1v1h-1zM873 522h1v1h-1zM615 523h1v1h-1zM561 481h1v1h-1zM692 521h1v1h-1zM656 523h1v1h-1zM711 525h1v1h-1zM594 521h1v1h-1zM629 523h1v1h-1zM726 523h1v1h-1zM855 521h1v1h-1zM663 526h1v1h-1zM728 479h1v1h-1zM669 521h1v1h-1zM696 479h1v1h-1zM931 522h1v1h-1zM607 479h1v1h-1zM959 479h1v1h-1zM762 522h1v1h-1zM740 483h1v1h-1zM695 478h1v1h-1zM903 523h1v1h-1zM648 481h1v1h-1zM836 483h1v1h-1zM562 481h1v1h-1zM802 480h1v1h-1zM578 481h1v1h-1zM602 481h1v1h-1zM719 483h1v1h-1zM942 482h1v1h-1zM786 521h1v1h-1zM587 525h1v1h-1zM778 480h1v1h-1zM848 482h1v1h-1zM786 483h1v1h-1zM622 483h1v1h-1zM701 522h1v1h-1zM745 521h1v1h-1zM893 523h1v1h-1zM620 483h1v1h-1zM861 480h1v1h-1zM807 481h1v1h-1zM787 482h1v1h-1zM542 480h1v1h-1zM959 521h1v1h-1zM779 521h1v1h-1zM781 524h1v1h-1zM964 480h1v1h-1zM549 522h1v1h-1zM933 482h1v1h-1zM924 521h1v1h-1zM908 481h1v1h-1zM582 521h1v1h-1zM739 523h1v1h-1zM955 524h1v1h-1zM586 523h1v1h-1zM962 522h1v1h-1zM923 521h1v1h-1zM873 521h1v1h-1zM609 523h1v1h-1zM803 521h1v1h-1zM582 521h1v1h-1zM685 481h1v1h-1zM629 483h1v1h-1zM811 524h1v1h-1zM696 483h1v1h-1zM533 480h1v1h-1zM699 480h1v1h-1zM804 480h1v1h-1zM695 478h1v1h-1zM838 522h1v1h-1zM787 522h1v1h-1zM816 482h1v1h-1zM791 522h1v1h-1zM753 523h1v1h-1zM644 526h1v1h-1zM802 481h1v1h-1zM673 483h1v1h-1zM758 482h1v1h-1zM591 479h1v1h-1zM547 521h1v1h-1zM666 482h1v1h-1zM804 480h1v1h-1zM593 522h1v1h-1zM894 522h1v1h-1zM720 483h1v1h-1zM883 482h1v1h-1zM767 480h1v1h-1zM849 522h1v1h-1zM786 481h1v1h-1zM566 522h1v1h-1zM720 481h1v1h-1zM602 523h1v1h-1zM801 524h1v1h-1zM661 522h1v1h-1zM565 480h1v1h-1zM874 478h1v1h-1zM801 523h1v1h-1zM783 522h1v1h-1zM692 483h1v1h-1zM760 522h1v1h-1zM592 483h1v1h-1zM674 525h1v1h-1zM940 523h1v1h-1zM966 481h1v1h-1zM722 483h1v1h-1zM813 524h1v1h-1zM700 521h1v1h-1zM728 526h1v1h-1zM558 478h1v1h-1zM533 480h1v1h-1zM686 521h1v1h-1zM793 521h1v1h-1zM712 522h1v1h-1zM629 481h1v1h-1zM672 525h1v1h-1zM714 521h1v1h-1zM734 527h1v1h-1zM601 528h1v1h-1zM970 523h1v1h-1zM740 480h1v1h-1zM542 482h1v1h-1zM882 524h1v1h-1zM904 521h1v1h-1zM921 483h1v1h-1zM651 482h1v1h-1zM769 522h1v1h-1zM582 521h1v1h-1zM933 483h1v1h-1zM721 481h1v1h-1zM579 479h1v1h-1zM612 483h1v1h-1zM834 524h1v1h-1zM885 521h1v1h-1zM722 523h1v1h-1zM872 480h1v1h-1zM964 480h1v1h-1zM550 483h1v1h-1zM591 479h1v1h-1zM893 523h1v1h-1zM860 483h1v1h-1zM870 482h1v1h-1zM654 482h1v1h-1zM742 523h1v1h-1zM548 481h1v1h-1zM934 524h1v1h-1zM623 483h1v1h-1zM535 521h1v1h-1zM667 521h1v1h-1zM901 481h1v1h-1zM607 523h1v1h-1zM910 522h1v1h-1zM837 525h1v1h-1zM889 522h1v1h-1zM743 482h1v1h-1zM909 482h1v1h-1zM658 482h1v1h-1zM731 522h1v1h-1zM871 483h1v1h-1zM932 480h1v1h-1zM870 522h1v1h-1zM600 480h1v1h-1zM909 479h1v1h-1zM952 524h1v1h-1zM747 522h1v1h-1zM741 481h1v1h-1zM648 526h1v1h-1zM569 523h1v1h-1zM850 481h1v1h-1zM944 525h1v1h-1zM691 522h1v1h-1zM547 524h1v1h-1zM948 481h1v1h-1zM793 481h1v1h-1zM861 521h1v1h-1zM581 482h1v1h-1zM956 479h1v1h-1zM909 483h1v1h-1zM809 524h1v1h-1zM573 522h1v1h-1zM581 521h1v1h-1zM820 521h1v1h-1zM809 524h1v1h-1zM952 525h1v1h-1zM838 521h1v1h-1zM920 482h1v1h-1zM622 523h1v1h-1zM569 527h1v1h-1zM784 522h1v1h-1zM921 482h1v1h-1zM888 521h1v1h-1zM967 526h1v1h-1zM732 483h1v1h-1zM939 483h1v1h-1zM550 480h1v1h-1zM836 480h1v1h-1zM671 481h1v1h-1zM750 522h1v1h-1zM648 481h1v1h-1zM560 481h1v1h-1zM962 521h1v1h-1zM622 523h1v1h-1zM674 483h1v1h-1zM910 483h1v1h-1zM581 478h1v1h-1zM541 522h1v1h-1zM660 521h1v1h-1zM691 479h1v1h-1zM890 523h1v1h-1zM535 521h1v1h-1zM792 522h1v1h-1zM959 522h1v1h-1zM702 523h1v1h-1zM921 521h1v1h-1zM832 522h1v1h-1zM712 481h1v1h-1zM708 481h1v1h-1zM736 479h1v1h-1zM759 480h1v1h-1zM651 481h1v1h-1zM830 521h1v1h-1zM708 482h1v1h-1zM706 523h1v1h-1zM830 523h1v1h-1zM551 483h1v1h-1zM811 521h1v1h-1zM540 483h1v1h-1zM738 483h1v1h-1zM930 523h1v1h-1zM634 481h1v1h-1zM843 482h1v1h-1zM825 522h1v1h-1zM539 483h1v1h-1zM793 478h1v1h-1zM688 521h1v1h-1zM896 481h1v1h-1zM611 523h1v1h-1zM956 483h1v1h-1zM963 522h1v1h-1zM754 481h1v1h-1zM815 524h1v1h-1zM781 483h1v1h-1zM719 482h1v1h-1zM619 482h1v1h-1zM885 483h1v1h-1zM713 522h1v1h-1zM733 481h1v1h-1zM581 524h1v1h-1zM851 525h1v1h-1zM957 521h1v1h-1zM552 482h1v1h-1zM595 481h1v1h-1zM743 480h1v1h-1zM968 481h1v1h-1zM778 521h1v1h-1zM779 482h1v1h-1zM600 482h1v1h-1zM852 523h1v1h-1zM680 482h1v1h-1zM617 481h1v1h-1zM733 522h1v1h-1zM964 483h1v1h-1zM577 521h1v1h-1zM696 481h1v1h-1zM916 481h1v1h-1zM701 483h1v1h-1zM970 482h1v1h-1zM822 522h1v1h-1zM834 522h1v1h-1zM683 521h1v1h-1zM661 480h1v1h-1zM670 479h1v1h-1zM597 521h1v1h-1zM689 481h1v1h-1zM923 480h1v1h-1zM779 523h1v1h-1zM686 481h1v1h-1zM840 522h1v1h-1zM953 522h1v1h-1zM933 480h1v1h-1zM780 524h1v1h-1zM772 483h1v1h-1zM532 478h1v1h-1zM965 481h1v1h-1zM961 483h1v1h-1zM640 522h1v1h-1zM902 480h1v1h-1zM818 522h1v1h-1zM921 483h1v1h-1zM871 523h1v1h-1zM758 524h1v1h-1zM749 524h1v1h-1zM952 479h1v1h-1zM753 483h1v1h-1zM756 525h1v1h-1zM542 522h1v1h-1zM810 521h1v1h-1zM699 482h1v1h-1zM733 479h1v1h-1zM760 521h1v1h-1zM648 525h1v1h-1zM898 524h1v1h-1zM750 482h1v1h-1zM589 523h1v1h-1zM552 482h1v1h-1zM561 483h1v1h-1zM628 522h1v1h-1zM906 525h1v1h-1zM532 483h1v1h-1zM909 523h1v1h-1zM575 483h1v1h-1zM809 521h1v1h-1zM676 522h1v1h-1zM780 521h1v1h-1zM575 523h1v1h-1zM917 483h1v1h-1zM623 483h1v1h-1zM606 522h1v1h-1zM731 522h1v1h-1zM592 524h1v1h-1zM913 525h1v1h-1zM795 483h1v1h-1zM855 522h1v1h-1zM921 478h1v1h-1zM607 482h1v1h-1zM658 482h1v1h-1zM792 521h1v1h-1zM948 483h1v1h-1zM925 521h1v1h-1zM949 522h1v1h-1zM586 522h1v1h-1zM583 522h1v1h-1zM858 481h1v1h-1zM643 521h1v1h-1zM876 481h1v1h-1zM927 482h1v1h-1zM609 525h1v1h-1zM664 522h1v1h-1zM943 522h1v1h-1zM594 483h1v1h-1zM945 482h1v1h-1zM658 524h1v1h-1zM870 522h1v1h-1zM747 481h1v1h-1zM731 525h1v1h-1zM670 521h1v1h-1zM896 521h1v1h-1zM855 521h1v1h-1zM734 524h1v1h-1zM563 482h1v1h-1zM540 482h1v1h-1zM601 521h1v1h-1zM682 524h1v1h-1zM832 481h1v1h-1zM954 481h1v1h-1zM696 479h1v1h-1zM617 479h1v1h-1zM771 483h1v1h-1zM866 481h1v1h-1zM571 482h1v1h-1zM926 481h1v1h-1zM582 521h1v1h-1zM936 483h1v1h-1zM760 526h1v1h-1zM967 483h1v1h-1zM819 483h1v1h-1zM661 521h1v1h-1zM566 481h1v1h-1zM788 480h1v1h-1zM751 526h1v1h-1zM765 525h1v1h-1zM787 522h1v1h-1zM812 522h1v1h-1zM627 482h1v1h-1zM582 525h1v1h-1zM960 524h1v1h-1zM913 523h1v1h-1zM657 525h1v1h-1zM631 522h1v1h-1zM770 482h1v1h-1zM843 482h1v1h-1zM782 521h1v1h-1zM781 521h1v1h-1zM752 522h1v1h-1zM586 481h1v1h-1zM653 483h1v1h-1zM672 481h1v1h-1zM721 524h1v1h-1zM718 524h1v1h-1zM619 523h1v1h-1zM688 521h1v1h-1zM794 483h1v1h-1zM858 480h1v1h-1zM821 482h1v1h-1zM718 477h1v1h-1zM619 522h1v1h-1zM860 522h1v1h-1zM627 482h1v1h-1zM847 523h1v1h-1zM911 522h1v1h-1zM691 521h1v1h-1zM705 482h1v1h-1zM918 478h1v1h-1zM534 482h1v1h-1zM593 477h1v1h-1zM835 481h1v1h-1zM560 523h1v1h-1zM595 522h1v1h-1zM765 524h1v1h-1zM769 521h1v1h-1zM725 483h1v1h-1zM626 483h1v1h-1zM585 522h1v1h-1zM653 521h1v1h-1zM778 521h1v1h-1zM967 525h1v1h-1zM646 522h1v1h-1zM666 477h1v1h-1zM694 482h1v1h-1zM895 521h1v1h-1zM872 480h1v1h-1zM648 522h1v1h-1zM619 523h1v1h-1zM702 483h1v1h-1zM913 479h1v1h-1zM927 521h1v1h-1zM662 482h1v1h-1zM702 479h1v1h-1zM875 482h1v1h-1zM911 522h1v1h-1zM751 523h1v1h-1zM555 521h1v1h-1zM546 482h1v1h-1zM906 524h1v1h-1zM899 481h1v1h-1zM742 480h1v1h-1zM575 481h1v1h-1zM671 521h1v1h-1zM890 480h1v1h-1zM830 522h1v1h-1zM893 522h1v1h-1zM782 482h1v1h-1zM865 523h1v1h-1zM934 482h1v1h-1zM917 522h1v1h-1zM726 478h1v1h-1zM797 522h1v1h-1zM820 482h1v1h-1zM939 523h1v1h-1zM864 482h1v1h-1zM887 521h1v1h-1zM670 521h1v1h-1zM710 521h1v1h-1zM904 482h1v1h-1zM745 479h1v1h-1zM972 523h1v1h-1zM815 483h1v1h-1zM921 521h1v1h-1zM553 522h1v1h-1zM773 523h1v1h-1zM634 524h1v1h-1zM902 483h1v1h-1zM587 522h1v1h-1zM568 524h1v1h-1zM531 522h1v1h-1zM735 521h1v1h-1zM705 521h1v1h-1zM661 483h1v1h-1zM799 483h1v1h-1zM547 483h1v1h-1zM545 483h1v1h-1zM635 521h1v1h-1zM939 482h1v1h-1zM877 523h1v1h-1zM860 479h1v1h-1zM940 522h1v1h-1zM583 481h1v1h-1zM960 478h1v1h-1zM877 482h1v1h-1zM870 483h1v1h-1zM830 479h1v1h-1zM590 521h1v1h-1zM847 524h1v1h-1zM772 483h1v1h-1zM731 482h1v1h-1zM645 482h1v1h-1zM810 483h1v1h-1zM858 541h1v1h-1zM637 471h1v1h-1zM789 475h1v1h-1zM627 528h1v1h-1zM777 468h1v1h-1zM666 535h1v1h-1zM555 529h1v1h-1zM601 471h1v1h-1zM879 473h1v1h-1zM908 477h1v1h-1zM823 469h1v1h-1zM944 477h1v1h-1zM785 475h1v1h-1zM922 533h1v1h-1zM815 474h1v1h-1zM896 538h1v1h-1zM823 467h1v1h-1zM949 538h1v1h-1zM632 532h1v1h-1zM738 477h1v1h-1zM747 533h1v1h-1zM731 537h1v1h-1zM769 470h1v1h-1zM554 472h1v1h-1zM603 535h1v1h-1zM712 467h1v1h-1zM607 467h1v1h-1zM636 543h1v1h-1zM777 531h1v1h-1zM538 537h1v1h-1zM890 470h1v1h-1zM795 528h1v1h-1zM583 537h1v1h-1zM699 477h1v1h-1zM881 539h1v1h-1zM609 476h1v1h-1zM711 537h1v1h-1zM968 532h1v1h-1zM687 470h1v1h-1zM560 544h1v1h-1zM553 530h1v1h-1zM553 530h1v1h-1zM540 524h1v1h-1zM553 525h1v1h-1zM554 522h1v1h-1zM535 526h1v1h-1zM551 527h1v1h-1zM545 525h1v1h-1zM531 526h1v1h-1zM544 525h1v1h-1zM538 521h1v1h-1zM539 524h1v1h-1zM536 523h1v1h-1zM555 529h1v1h-1zM555 523h1v1h-1zM545 524h1v1h-1zM550 529h1v1h-1zM531 527h1v1h-1zM541 529h1v1h-1zM549 524h1v1h-1zM547 521h1v1h-1zM533 522h1v1h-1zM534 525h1v1h-1zM540 534h1v1h-1zM533 521h1v1h-1zM554 530h1v1h-1zM535 530h1v1h-1zM544 522h1v1h-1zM551 533h1v1h-1zM552 521h1v1h-1zM552 521h1v1h-1zM548 530h1v1h-1zM556 524h1v1h-1zM539 522h1v1h-1zM550 525h1v1h-1zM548 522h1v1h-1zM542 524h1v1h-1zM543 526h1v1h-1zM531 530h1v1h-1zM539 528h1v1h-1zM543 529h1v1h-1zM535 532h1v1h-1zM542 530h1v1h-1zM535 530h1v1h-1zM554 530h1v1h-1zM533 522h1v1h-1zM541 527h1v1h-1zM540 521h1v1h-1zM553 522h1v1h-1zM545 524h1v1h-1zM548 525h1v1h-1zM534 521h1v1h-1zM549 525h1v1h-1zM538 540h1v1h-1zM545 537h1v1h-1zM538 521h1v1h-1zM550 521h1v1h-1zM531 523h1v1h-1zM531 527h1v1h-1zM542 534h1v1h-1zM536 527h1v1h-1zM532 524h1v1h-1zM536 524h1v1h-1zM536 527h1v1h-1zM542 528h1v1h-1zM538 527h1v1h-1zM537 524h1v1h-1zM554 527h1v1h-1zM543 531h1v1h-1zM534 522h1v1h-1zM550 524h1v1h-1zM544 539h1v1h-1zM541 522h1v1h-1zM544 529h1v1h-1zM541 522h1v1h-1zM534 524h1v1h-1zM547 525h1v1h-1zM550 533h1v1h-1zM532 531h1v1h-1zM546 526h1v1h-1zM556 523h1v1h-1zM550 528h1v1h-1zM549 533h1v1h-1zM554 525h1v1h-1zM543 525h1v1h-1zM556 524h1v1h-1zM548 528h1v1h-1zM533 531h1v1h-1zM544 531h1v1h-1zM531 521h1v1h-1zM545 526h1v1h-1zM532 533h1v1h-1zM556 526h1v1h-1zM551 522h1v1h-1zM534 522h1v1h-1zM555 532h1v1h-1zM556 527h1v1h-1zM532 521h1v1h-1zM556 522h1v1h-1zM538 532h1v1h-1zM531 522h1v1h-1zM551 521h1v1h-1zM553 523h1v1h-1zM546 526h1v1h-1zM533 527h1v1h-1zM535 525h1v1h-1zM554 521h1v1h-1zM531 534h1v1h-1zM553 529h1v1h-1zM540 527h1v1h-1zM544 477h1v1h-1zM531 480h1v1h-1zM538 483h1v1h-1zM536 481h1v1h-1zM542 480h1v1h-1zM544 482h1v1h-1zM544 483h1v1h-1zM538 481h1v1h-1zM540 480h1v1h-1zM535 470h1v1h-1zM536 483h1v1h-1zM539 482h1v1h-1zM542 483h1v1h-1zM545 478h1v1h-1zM540 481h1v1h-1zM536 482h1v1h-1zM532 479h1v1h-1zM531 483h1v1h-1zM540 479h1v1h-1zM544 482h1v1h-1zM544 477h1v1h-1zM539 481h1v1h-1zM539 483h1v1h-1zM544 478h1v1h-1zM542 479h1v1h-1zM539 478h1v1h-1zM535 472h1v1h-1zM541 480h1v1h-1zM536 477h1v1h-1zM540 480h1v1h-1zM626 474h1v1h-1zM626 475h1v1h-1zM626 476h1v1h-1zM626 477h1v1h-1zM626 478h1v1h-1zM626 479h1v1h-1zM626 480h2v1h-2zM626 481h2v1h-2zM626 482h2v1h-2zM626 483h2v1h-2zM626 484h2v1h-2zM626 485h2v1h-2zM748 520h1v1h-1zM748 521h1v1h-1zM748 522h1v1h-1zM748 523h1v1h-1zM748 524h1v1h-1zM748 525h1v1h-1zM748 526h1v1h-1zM748 527h1v1h-1zM748 528h1v1h-1zM748 529h1v1h-1zM748 530h1v1h-1zM955 484h1v1h-1zM955 521h1v1h-1zM956 484h1v1h-1zM956 521h1v1h-1zM957 483h1v1h-1zM957 484h1v1h-1zM957 521h1v1h-1zM958 483h1v1h-1zM958 484h1v1h-1zM958 521h1v1h-1zM958 522h1v1h-1zM959 483h1v1h-1zM959 521h1v1h-1zM959 522h1v1h-1zM960 482h1v1h-1zM960 483h1v1h-1zM961 482h1v1h-1zM961 484h1v1h-1zM961 521h1v1h-1zM961 522h1v1h-1zM961 524h1v1h-1zM962 481h1v1h-1zM962 482h1v1h-1zM962 483h1v1h-1zM962 484h1v1h-1zM962 521h1v1h-1zM962 523h1v1h-1zM963 481h1v1h-1zM963 483h1v1h-1zM963 484h1v1h-1zM963 521h1v1h-1zM963 523h1v1h-1zM963 524h1v1h-1zM963 525h1v1h-1zM964 481h1v1h-1zM964 482h1v1h-1zM964 483h1v1h-1zM964 484h1v1h-1zM964 521h1v1h-1zM964 523h1v1h-1zM964 524h1v1h-1zM964 525h1v1h-1zM965 480h1v1h-1zM965 481h1v1h-1zM965 484h1v1h-1zM965 521h1v1h-1zM965 522h1v1h-1zM965 523h1v1h-1zM965 524h1v1h-1zM965 526h1v1h-1zM966 480h1v1h-1zM966 481h1v1h-1zM966 482h1v1h-1zM966 483h1v1h-1zM966 484h1v1h-1zM966 521h1v1h-1zM966 522h1v1h-1zM966 523h1v1h-1zM966 524h1v1h-1zM966 525h1v1h-1zM967 480h1v1h-1zM967 481h1v1h-1zM967 482h1v1h-1zM967 483h1v1h-1zM967 484h1v1h-1zM967 521h1v1h-1zM967 525h1v1h-1zM968 479h1v1h-1zM968 480h1v1h-1zM968 481h1v1h-1zM968 483h1v1h-1zM968 484h1v1h-1zM968 521h1v1h-1zM968 523h1v1h-1zM968 524h1v1h-1zM968 525h1v1h-1zM968 527h1v1h-1zM969 482h1v1h-1zM969 483h1v1h-1zM969 484h1v1h-1zM969 521h1v1h-1zM969 523h1v1h-1zM969 524h1v1h-1zM969 526h1v1h-1zM969 527h1v1h-1zM970 480h1v1h-1zM970 481h1v1h-1zM970 483h1v1h-1zM970 484h1v1h-1zM970 521h1v1h-1zM970 522h1v1h-1zM970 523h1v1h-1zM970 524h1v1h-1zM970 528h1v1h-1zM971 478h1v1h-1zM971 479h1v1h-1zM971 480h1v1h-1zM971 484h1v1h-1zM971 522h1v1h-1zM971 523h1v1h-1zM971 524h1v1h-1zM971 525h1v1h-1zM971 527h1v1h-1zM971 528h1v1h-1zM971 529h1v1h-1zM972 479h1v1h-1zM972 482h1v1h-1zM972 484h1v1h-1zM972 521h1v1h-1zM972 522h1v1h-1zM972 523h1v1h-1zM972 524h1v1h-1zM972 526h1v1h-1zM972 527h1v1h-1zM624 519h5v1h-5zM624 520h5v1h-5zM624 521h5v1h-5zM624 522h5v1h-5zM625 523h4v1h-4zM625 524h4v1h-4zM625 525h4v1h-4zM625 526h4v1h-4zM625 527h4v1h-4zM625 528h4v1h-4zM625 529h3v1h-3zM625 530h3v1h-3zM625 531h3v1h-3zM625 532h3v1h-3zM625 533h3v1h-3zM625 534h3v1h-3zM625 535h3v1h-3zM626 536h2v1h-2zM626 537h2v1h-2zM626 538h2v1h-2zM626 539h2v1h-2zM626 540h2v1h-2zM626 541h2v1h-2zM626 542h2v1h-2zM626 543h2v1h-2zM626 544h1v1h-1zM626 545h1v1h-1zM626 546h1v1h-1zM626 547h1v1h-1zM626 548h1v1h-1zM626 549h1v1h-1zM626 550h1v1h-1zM626 551h1v1h-1zM626 552h1v1h-1zM626 553h1v1h-1zM626 554h1v1h-1zM626 555h1v1h-1zM626 556h1v1h-1zM626 557h1v1h-1zM626 558h1v1h-1zM626 559h1v1h-1zM626 560h1v1h-1z" fill="#0f0"/>
<path d="M522 502h9v2h-9zM973 502h8v2h-8z" fill="#f00"/>
<path d="M514.5 449V577M506 449.5H514M510 453.5H514M510 456.5H514M510 460.5H514M510 464.5H514M506 467.5H514M510 471.5H514M510 474.5H514M510 478.5H514M510 482.5H514M506 485.5H514M510 489.5H514M510 493.5H514M510 496.5H514M510 500.5H514M506 503.5H514M510 507.5H514M510 511.5H514M510 514.5H514M510 518.5H514M506 522.5H514M510 525.5H514M510 529.5H514M510 532.5H514M510 536.5H514M506 540.5H514M510 543.5H514M510 547.5H514M510 551.5H514M510 554.5H514M506 558.5H514M510 561.5H514M510 565.5H514M510 569.5H514M510 572.5H514M506 576.5H514M523 585.5H980M531.5 585V589M551.5 585V593M571.5 585V589M591.5 585V591M611.5 585V589M631.5 585V593M652.5 585V589M672.5 585V591M692.5 585V589M712.5 585V593M732.5 585V589M752.5 585V591M772.5 585V589M792.5 585V593M812.5 585V589M832.5 585V591M853.5 585V589M873.5 585V593M893.5 585V589M913.5 585V591M933.5 585V589M953.5 585V593M973.5 585V589" stroke="#000" stroke-width="1" fill="none"/>
<text x="501" y="454.8" text-anchor="end" font-size="14.83" fill="#000" textLength="40.09" lengthAdjust="spacingAndGlyphs">0.015</text>
<text x="501" y="472.8" text-anchor="end" font-size="14.83" fill="#000" textLength="31.17" lengthAdjust="spacingAndGlyphs">0.01</text>
<text x="501" y="490.8" text-anchor="end" font-size="14.83" fill="#000" textLength="40.09" lengthAdjust="spacingAndGlyphs">0.005</text>
<text x="501" y="508.8" text-anchor="end" font-size="14.83" fill="#000" textLength="8.92" lengthAdjust="spacingAndGlyphs">0</text>
<text x="501" y="527.8" text-anchor="end" font-size="14.83" fill="#000" textLength="45.14" lengthAdjust="spacingAndGlyphs">-0.005</text>
<text x="501" y="545.8" text-anchor="end" font-size="14.83" fill="#000" textLength="36.23" lengthAdjust="spacingAndGlyphs">-0.01</text>
<text x="501" y="563.8" text-anchor="end" font-size="14.83" fill="#000" textLength="45.14" lengthAdjust="spacingAndGlyphs">-0.015</text>
<text x="501" y="581.8" text-anchor="end" font-size="14.83" fill="#000" textLength="36.23" lengthAdjust="spacingAndGlyphs">-0.02</text>
<text x="551.5" y="609" text-anchor="middle" font-size="14.83" fill="#000" textLength="8.92" lengthAdjust="spacingAndGlyphs">6</text>
<text x="631.5" y="609" text-anchor="middle" font-size="14.83" fill="#000" textLength="22.27" lengthAdjust="spacingAndGlyphs">6.2</text>
<text x="712.5" y="609" text-anchor="middle" font-size="14.83" fill="#000" textLength="22.27" lengthAdjust="spacingAndGlyphs">6.4</text>
<text x="792.5" y="609" text-anchor="middle" font-size="14.83" fill="#000" textLength="22.27" lengthAdjust="spacingAndGlyphs">6.6</text>
<text x="873.5" y="609" text-anchor="middle" font-size="14.83" fill="#000" textLength="22.27" lengthAdjust="spacingAndGlyphs">6.8</text>
<text x="953.5" y="609" text-anchor="middle" font-size="14.83" fill="#000" textLength="8.92" lengthAdjust="spacingAndGlyphs">7</text>
<text x="751.6" y="432.2" text-anchor="middle" font-size="21.6" font-weight="bold" fill="#000" textLength="119.39" lengthAdjust="spacingAndGlyphs">Residuals</text>
<text transform="translate(449.5,512.5) rotate(-90)" text-anchor="middle" font-size="16.95" font-weight="bold" fill="#000" textLength="125.50" lengthAdjust="spacingAndGlyphs">OD Difference</text>
<text x="751" y="626.6" text-anchor="middle" font-size="16.95" font-weight="bold" fill="#000" textLength="107.33" lengthAdjust="spacingAndGlyphs">Radius (cm)</text></svg>
<svg style="position:absolute;left:0;top:0" width="1001" height="642" viewBox="0 0 1001 642"><g transform="translate(387,46)">
<path d="M2.5 2.5h18v21.5h-18z" fill="#dcdcdc" stroke="#555" stroke-width="1"/>
<path d="M0.5 0.5h17.5v21h-17.5z" fill="#fff" stroke="#1a1a1a" stroke-width="1"/>
<path d="M1 1h2v2h-2z" fill="#333"/>
<g fill="#0000ff"><circle cx="14" cy="3.8" r="1.3"/><circle cx="16" cy="2.6" r="0.8"/><circle cx="2.8" cy="16" r="1.3"/><circle cx="4.5" cy="15" r="0.7"/><circle cx="7" cy="19.3" r="1.1"/><circle cx="8.5" cy="18.5" r="0.7"/></g>
<path d="M14.8 15.2 L22 22.6" stroke="#222" stroke-width="3.2" stroke-linecap="round"/>
<path d="M14.8 15.2 L22 22.6" stroke="#9a9a9a" stroke-width="1.4" stroke-linecap="round"/>
<circle cx="10.5" cy="10.5" r="4.6" fill="#fff" stroke="#111" stroke-width="1.6"/>
<path d="M10 7.3a3.4 3.4 0 0 1 3.4 2" stroke="#60e0e0" stroke-width="1.2" fill="none"/>
<g fill="#0000ff"><circle cx="9.6" cy="11.4" r="1.6"/><circle cx="11.8" cy="9.2" r="1"/><circle cx="12.3" cy="11.8" r="0.8"/><circle cx="8.8" cy="8.8" r="0.6"/></g>
</g>
<g transform="translate(389,98)">
<path d="M0 0h8v2h12.7v20.5h-20.7z" fill="#f4f4f4"/>
<path d="M0 0h8v2h12.7v2h-20.7z" fill="#a6c0e2"/>
<rect x="0.5" y="4" width="19.7" height="16.3" fill="#fbfbfb" stroke="#c6c6c6" stroke-width="1"/>
<rect x="1" y="6" width="18.5" height="3" fill="#cddcee"/>
<path d="M1 6.2h18.5M1 9.2h18.5M1 12.5h18.5M1 15.5h18.5M1 18.6h18.5M1.2 6v12.6M5.5 6v12.6M10.5 6v12.6M14.5 6v12.6M19.3 6v12.6" stroke="#8c8c8c" stroke-width="0.9" fill="none"/>
<rect x="1" y="20.5" width="19" height="1" fill="#c8c8c8"/>
</g>
<g transform="translate(387,149)">
<path d="M0.5 9.5 L8.5 0.5 L24 5 L16 14 Z" fill="#d8d8d8" stroke="#2a2a2a" stroke-width="1" stroke-linejoin="round"/>
<path d="M0.5 9.5 L16 14 L16 22.5 L0.5 18.5 Z" fill="#e6e6e6" stroke="#2a2a2a" stroke-width="1" stroke-linejoin="round"/>
<path d="M16 14 L24 5 L24 13.5 L16 22.5 Z" fill="#6a6a6a" stroke="#2a2a2a" stroke-width="1" stroke-linejoin="round"/>
<path d="M4.5 8.2 L9.5 3.5 L15 5.2 L10 10 Z" fill="#fff" stroke="#555" stroke-width="0.6"/>
<path d="M10 10 L15 5.2 L19 6.3 L14 11.3 Z" fill="#4a4a4a"/>
<path d="M1.5 12.5 L15 16.2 M1.5 15 L15 18.8" stroke="#b4b4b4" stroke-width="0.8"/>
<path d="M12 15.3 V21.3" stroke="#bdbdbd" stroke-width="0.8"/>
<circle cx="17" cy="10.6" r="1" fill="#22dd22"/>
<path d="M19 6.8 l1.6 0.4 l-0.9 1.4 l-1.4 -0.4z" fill="#e6d21a"/>
</g>
<g transform="translate(387,199)">
<rect x="0" y="0" width="24" height="24" fill="#0000ff"/>
<path d="M6.5 2v22M2 6.5h8" stroke="#fff" stroke-width="0.8" stroke-dasharray="1 2" opacity="0.8"/>
<path d="M0 22 L2 17 L4 14 L5 11 L7 10 L8.5 11 L10 8 L12 9 L13.5 6 L15 7 L17 3.5 L18.5 5 L20 3 L21.5 4.5 L23 2 L24 3" stroke="#ffff00" stroke-width="1.3" fill="none"/>
<path d="M4 12 L6 10 L5.5 13z M15.5 5 L17 3 L17.5 6z" fill="#ffff00"/>
<path d="M10 24 L12 20 L14 18 L15 15 L16.5 16 L18 13 L19.5 11 L21 10 L22.5 8 L24 7" stroke="#ffff00" stroke-width="1.3" fill="none"/>
<path d="M15 15 l1.5 -3 l0.5 3z M19.5 11 l1.5 -2.5 l0.4 3z" fill="#ffff00"/>
<rect x="22" y="22" width="2" height="2" fill="#ffff00"/>
</g>
<g transform="translate(387,250)">
<rect x="0" y="0" width="24" height="24" fill="#00ff00"/>
<path d="M7 18h1v1h-1zM19 15h1v1h-1zM15 8h1v1h-1zM22 15h2v2h-2zM20 4h1v1h-1zM16 12h1v1h-1zM5 18h1v1h-1zM0 8h2v2h-2zM22 13h2v2h-2zM4 11h1v1h-1zM4 15h1v1h-1zM21 13h1v2h-1zM16 12h1v2h-1zM18 7h1v1h-1zM8 19h1v1h-1zM17 18h1v1h-1zM20 18h1v1h-1zM3 2h2v2h-2zM2 11h1v2h-1zM4 0h1v2h-1zM13 3h1v1h-1zM12 22h1v1h-1zM16 7h1v1h-1zM0 2h1v1h-1zM6 13h1v1h-1zM4 22h1v1h-1zM10 11h1v2h-1zM12 14h2v1h-2zM19 16h1v2h-1zM20 23h1v1h-1zM13 8h1v1h-1zM0 13h1v1h-1zM12 19h1v1h-1zM20 20h1v2h-1zM11 21h1v1h-1zM23 15h1v1h-1zM21 0h1v1h-1zM20 14h1v1h-1zM5 11h1v1h-1zM11 19h1v1h-1zM12 3h1v1h-1zM9 16h1v1h-1zM7 10h1v2h-1zM20 22h1v1h-1zM19 10h1v1h-1zM14 5h1v1h-1zM23 20h1v2h-1zM8 7h1v1h-1zM16 6h1v1h-1zM8 10h1v1h-1zM18 4h2v1h-2zM16 8h2v1h-2zM20 13h1v2h-1zM18 13h1v2h-1zM4 6h1v2h-1zM19 16h2v1h-2zM1 23h2v1h-2zM17 10h1v1h-1zM18 9h1v1h-1zM1 1h1v2h-1zM18 1h1v2h-1zM23 3h1v1h-1zM7 21h1v2h-1zM1 19h1v1h-1zM4 8h2v1h-2zM11 7h1v1h-1zM17 3h1v1h-1zM8 4h1v2h-1zM20 18h2v1h-2zM8 7h1v2h-1z" fill="#000" shape-rendering="crispEdges"/>
<path d="M2 13h1v1h-1zM7 13h1v1h-1zM14 13h1v1h-1zM19 13h1v1h-1z" fill="#c05000"/>
</g>
<g transform="translate(387,300)">
<path d="M6 23.6 H19" stroke="#777" stroke-width="1.3" opacity="0.75"/>
<path d="M1.6 1.6 L11.5 11.5" stroke="#9a9a9a" stroke-width="2" stroke-linecap="round"/>
<path d="M1.6 1.6 L11.5 11.5" stroke="#e8e8e8" stroke-width="0.9" stroke-linecap="round"/>
<path d="M15.5 8.5 L3.8 21.2" stroke="#1448c0" stroke-width="4.4" stroke-linecap="round"/>
<path d="M15 8.6 L4.2 20.4" stroke="#5a9af5" stroke-width="1.3" stroke-linecap="round" opacity="0.85"/>
<path d="M15.3 3.2 A4 4 0 1 0 21.8 8.6 L19.6 7.4 L18.2 5.8 L17.6 3.4 Z" fill="#cfcfcf" stroke="#8a8a8a" stroke-width="0.8"/>
<path d="M16.4 4.6 l1.6 -0.8 M19.5 8.2 l0.6 1.6" stroke="#fff" stroke-width="0.8"/>
<path d="M10.6 11.2 L21 21.8" stroke="#a51414" stroke-width="4.4" stroke-linecap="round"/>
<path d="M11.4 11.2 L21 20.8" stroke="#f06060" stroke-width="1.1" opacity="0.9"/>
</g>
<path d="M402 387.5 l3 2.5 l3 -2.5 M402 391.5 l3 2.5 l3 -2.5" stroke="#777" stroke-width="1" fill="none"/><g transform="translate(387,408)">
<path d="M2.5 2.5h18v21.5h-18z" fill="#dcdcdc" stroke="#555" stroke-width="1"/>
<path d="M0.5 0.5h17.5v21h-17.5z" fill="#fff" stroke="#1a1a1a" stroke-width="1"/>
<path d="M1 1h2v2h-2z" fill="#333"/>
<g fill="#0000ff"><circle cx="14" cy="3.8" r="1.3"/><circle cx="16" cy="2.6" r="0.8"/><circle cx="2.8" cy="16" r="1.3"/><circle cx="4.5" cy="15" r="0.7"/><circle cx="7" cy="19.3" r="1.1"/><circle cx="8.5" cy="18.5" r="0.7"/></g>
<path d="M14.8 15.2 L22 22.6" stroke="#222" stroke-width="3.2" stroke-linecap="round"/>
<path d="M14.8 15.2 L22 22.6" stroke="#9a9a9a" stroke-width="1.4" stroke-linecap="round"/>
<circle cx="10.5" cy="10.5" r="4.6" fill="#fff" stroke="#111" stroke-width="1.6"/>
<path d="M10 7.3a3.4 3.4 0 0 1 3.4 2" stroke="#60e0e0" stroke-width="1.2" fill="none"/>
<g fill="#0000ff"><circle cx="9.6" cy="11.4" r="1.6"/><circle cx="11.8" cy="9.2" r="1"/><circle cx="12.3" cy="11.8" r="0.8"/><circle cx="8.8" cy="8.8" r="0.6"/></g>
</g>
<g transform="translate(389,460)">
<path d="M0 0h8v2h12.7v20.5h-20.7z" fill="#f4f4f4"/>
<path d="M0 0h8v2h12.7v2h-20.7z" fill="#a6c0e2"/>
<rect x="0.5" y="4" width="19.7" height="16.3" fill="#fbfbfb" stroke="#c6c6c6" stroke-width="1"/>
<rect x="1" y="6" width="18.5" height="3" fill="#cddcee"/>
<path d="M1 6.2h18.5M1 9.2h18.5M1 12.5h18.5M1 15.5h18.5M1 18.6h18.5M1.2 6v12.6M5.5 6v12.6M10.5 6v12.6M14.5 6v12.6M19.3 6v12.6" stroke="#8c8c8c" stroke-width="0.9" fill="none"/>
<rect x="1" y="20.5" width="19" height="1" fill="#c8c8c8"/>
</g>
<g transform="translate(387,511)">
<path d="M0.5 9.5 L8.5 0.5 L24 5 L16 14 Z" fill="#d8d8d8" stroke="#2a2a2a" stroke-width="1" stroke-linejoin="round"/>
<path d="M0.5 9.5 L16 14 L16 22.5 L0.5 18.5 Z" fill="#e6e6e6" stroke="#2a2a2a" stroke-width="1" stroke-linejoin="round"/>
<path d="M16 14 L24 5 L24 13.5 L16 22.5 Z" fill="#6a6a6a" stroke="#2a2a2a" stroke-width="1" stroke-linejoin="round"/>
<path d="M4.5 8.2 L9.5 3.5 L15 5.2 L10 10 Z" fill="#fff" stroke="#555" stroke-width="0.6"/>
<path d="M10 10 L15 5.2 L19 6.3 L14 11.3 Z" fill="#4a4a4a"/>
<path d="M1.5 12.5 L15 16.2 M1.5 15 L15 18.8" stroke="#b4b4b4" stroke-width="0.8"/>
<path d="M12 15.3 V21.3" stroke="#bdbdbd" stroke-width="0.8"/>
<circle cx="17" cy="10.6" r="1" fill="#22dd22"/>
<path d="M19 6.8 l1.6 0.4 l-0.9 1.4 l-1.4 -0.4z" fill="#e6d21a"/>
</g>
<g transform="translate(387,561)">
<rect x="0" y="0" width="24" height="24" fill="#0000ff"/>
<path d="M6.5 2v22M2 6.5h8" stroke="#fff" stroke-width="0.8" stroke-dasharray="1 2" opacity="0.8"/>
<path d="M0 22 L2 17 L4 14 L5 11 L7 10 L8.5 11 L10 8 L12 9 L13.5 6 L15 7 L17 3.5 L18.5 5 L20 3 L21.5 4.5 L23 2 L24 3" stroke="#ffff00" stroke-width="1.3" fill="none"/>
<path d="M4 12 L6 10 L5.5 13z M15.5 5 L17 3 L17.5 6z" fill="#ffff00"/>
<path d="M10 24 L12 20 L14 18 L15 15 L16.5 16 L18 13 L19.5 11 L21 10 L22.5 8 L24 7" stroke="#ffff00" stroke-width="1.3" fill="none"/>
<path d="M15 15 l1.5 -3 l0.5 3z M19.5 11 l1.5 -2.5 l0.4 3z" fill="#ffff00"/>
<rect x="22" y="22" width="2" height="2" fill="#ffff00"/>
</g>
<path d="M396 629.5 l3 2.5 l3 -2.5 M396 633.5 l3 2.5 l3 -2.5" stroke="#777" stroke-width="1" fill="none"/></svg>
<div class="rb"></div>
<div class="t" style="left:89.09px;top:44.85px;font-size:16.95px;font-weight:bold;color:#fff;transform:scaleX(1.1136);transform-origin:center;">FE Analysis Data Viewer</div>
<div class="t" style="left:67.44px;top:235.85px;font-size:16.95px;font-weight:bold;color:#fff;transform:scaleX(1.0972);transform-origin:center;">FE Analysis Residuals Viewer</div>
<div class="t" style="left:34.50px;top:72.95px;font-size:16.95px;font-weight:bold;color:#000;transform:scaleX(1.1344);transform-origin:left;">Plot Experimental Data</div>
<div class="t" style="left:67.50px;top:99.95px;font-size:16.95px;font-weight:bold;color:#000;transform:scaleX(1.1329);transform-origin:left;">Subtract Time Invariant Noise</div>
<div class="t" style="left:67.50px;top:126.95px;font-size:16.95px;font-weight:bold;color:#000;transform:scaleX(1.1298);transform-origin:left;">Subtract Radially Invariant Noise</div>
<div class="t" style="left:34.50px;top:153.95px;font-size:16.95px;font-weight:bold;color:#000;transform:scaleX(1.1343);transform-origin:left;">Plot Simulated/Modeled Data</div>
<div class="t" style="left:67.50px;top:180.95px;font-size:16.95px;font-weight:bold;color:#000;transform:scaleX(1.1229);transform-origin:left;">Add Time Invariant Noise</div>
<div class="t" style="left:67.50px;top:207.95px;font-size:16.95px;font-weight:bold;color:#000;transform:scaleX(1.1205);transform-origin:left;">Add Radially Invariant Noise</div>
<div class="t" style="left:34.50px;top:263.95px;font-size:16.95px;font-weight:bold;color:#000;transform:scaleX(1.0988);transform-origin:left;">Plot Residuals</div>
<div class="t" style="left:34.50px;top:290.95px;font-size:16.95px;font-weight:bold;color:#000;transform:scaleX(1.1309);transform-origin:left;">Plot Time Invariant Noise</div>
<div class="t" style="left:34.50px;top:317.95px;font-size:16.95px;font-weight:bold;color:#000;transform:scaleX(1.1276);transform-origin:left;">Plot Radially Invariant Noise</div>
<div class="t" style="left:34.50px;top:344.95px;font-size:16.95px;font-weight:bold;color:#000;transform:scaleX(1.1003);transform-origin:left;">Plot Random Noise</div>
<div class="t" style="left:34.50px;top:371.95px;font-size:16.95px;font-weight:bold;color:#000;transform:scaleX(1.0985);transform-origin:left;">Show Residuals Bitmap</div>
<div class="t" style="left:3.50px;top:399.15px;font-size:16.95px;font-weight:bold;color:#fff;transform:scaleX(1.1232);transform-origin:left;">Variance:</div>
<div class="t" style="left:144.80px;top:398.95px;font-size:16.95px;font-weight:normal;color:#000;transform:scaleX(1.0091);transform-origin:left;">2.3832e-06</div>
<div class="t" style="left:3.50px;top:427.15px;font-size:16.95px;font-weight:bold;color:#fff;transform:scaleX(1.0709);transform-origin:left;">RMSD:</div>
<div class="t" style="left:144.80px;top:426.95px;font-size:16.95px;font-weight:normal;color:#000;transform:scaleX(1.0113);transform-origin:left;">0.00154376</div>
<div class="t" style="left:165.34px;top:619.65px;font-size:16.95px;font-weight:normal;color:#000;transform:scaleX(1.0065);transform-origin:center;">Close</div>
<div class="t" style="left:354.00px;top:12.73px;font-size:14.5px;font-weight:bold;color:#2e3436;transform:scaleX(1.0000);transform-origin:left;letter-spacing:0.954px;">Finite Element Data/Residuals Viewer</div>
<div class="t" style="left:381.41px;top:75.54px;font-size:13.77px;font-weight:normal;color:#000;transform:scaleX(1.0653);transform-origin:center;">Zoom</div>
<div class="t" style="left:384.84px;top:126.54px;font-size:13.77px;font-weight:normal;color:#000;transform:scaleX(0.9266);transform-origin:center;">CSV</div>
<div class="t" style="left:384.84px;top:177.54px;font-size:13.77px;font-weight:normal;color:#000;transform:scaleX(1.0563);transform-origin:center;">Print</div>
<div class="t" style="left:384.46px;top:228.54px;font-size:13.77px;font-weight:normal;color:#000;transform:scaleX(0.9361);transform-origin:center;">SVG</div>
<div class="t" style="left:384.08px;top:279.54px;font-size:13.77px;font-weight:normal;color:#000;transform:scaleX(0.9262);transform-origin:center;">PNG</div>
<div class="t" style="left:384.46px;top:330.54px;font-size:13.77px;font-weight:normal;color:#000;transform:scaleX(1.0226);transform-origin:center;">C...g</div>
<div class="t" style="left:381.41px;top:437.54px;font-size:13.77px;font-weight:normal;color:#000;transform:scaleX(1.0653);transform-origin:center;">Zoom</div>
<div class="t" style="left:384.84px;top:488.54px;font-size:13.77px;font-weight:normal;color:#000;transform:scaleX(0.9266);transform-origin:center;">CSV</div>
<div class="t" style="left:384.84px;top:539.54px;font-size:13.77px;font-weight:normal;color:#000;transform:scaleX(1.0563);transform-origin:center;">Print</div>
<div class="t" style="left:384.46px;top:590.54px;font-size:13.77px;font-weight:normal;color:#000;transform:scaleX(0.9361);transform-origin:center;">SVG</div>
</body></html>
